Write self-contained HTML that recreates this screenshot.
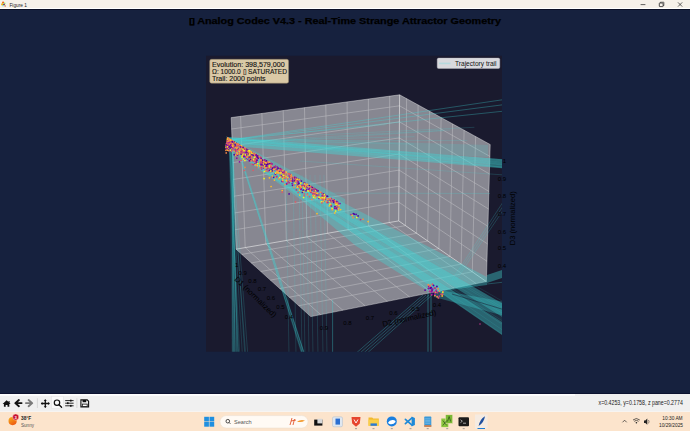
<!DOCTYPE html>
<html><head><meta charset="utf-8">
<style>
html,body{margin:0;padding:0;width:690px;height:431px;overflow:hidden;background:#16213e;font-family:"Liberation Sans",sans-serif;}
.abs{position:absolute;}
#titlebar{left:0;top:0;width:690px;height:8px;background:#f6f1e9;}
#tbline{left:0;top:8px;width:690px;height:1px;background:#ffffff;}
#tbdark{left:0;top:9px;width:690px;height:1px;background:#0b1026;}
#fig{left:0;top:10px;width:690px;height:383px;background:#16213e;}
#figbot{left:0;top:393px;width:690px;height:1px;background:#0d1330;}
#toolbar{left:0;top:394px;width:690px;height:18px;background:#f0f0f0;border-bottom:1px solid #f7f4f1;box-sizing:border-box;}
#tbwhite{left:0;top:394px;width:575px;height:2px;background:linear-gradient(#ffffff,#f9f9f9);}
#taskbar{left:0;top:412px;width:690px;height:19px;background:#fce4cc;}
svg{position:absolute;left:0;top:0;}
.t{position:absolute;white-space:nowrap;line-height:1;}
</style></head><body>
<div class="abs" id="titlebar"></div>
<div class="abs" id="tbline"></div>
<div class="abs" id="tbdark"></div>
<div class="abs" id="fig"></div>
<div class="abs" id="figbot"></div>
<div class="abs" id="toolbar"></div>
<div class="abs" id="tbwhite"></div>
<div class="abs" id="taskbar"></div>
<svg width="690" height="431" viewBox="0 0 690 431" font-family="Liberation Sans, sans-serif">
<rect x="206" y="55.7" width="296" height="296" fill="#1a1a2e"/>
<clipPath id="ax"><rect x="206" y="55.7" width="296" height="296"/></clipPath>
<g clip-path="url(#ax)">
<polygon points="231.2,117.6 399.6,94.8 490.2,144.5 486.4,281.6 310.8,316.6 236.1,249.2" fill="#878791" />
<line x1="240.6" y1="116.3" x2="245.2" y2="247.6" stroke="#b9b8be" stroke-width="0.60" />
<line x1="261.9" y1="113.4" x2="265.8" y2="244.0" stroke="#b9b8be" stroke-width="0.60" />
<line x1="283.2" y1="110.6" x2="286.3" y2="240.5" stroke="#b9b8be" stroke-width="0.60" />
<line x1="304.5" y1="107.7" x2="306.9" y2="236.9" stroke="#b9b8be" stroke-width="0.60" />
<line x1="325.8" y1="104.8" x2="327.5" y2="233.3" stroke="#b9b8be" stroke-width="0.60" />
<line x1="347.1" y1="101.9" x2="348.1" y2="229.7" stroke="#b9b8be" stroke-width="0.60" />
<line x1="368.4" y1="99.0" x2="368.6" y2="226.1" stroke="#b9b8be" stroke-width="0.60" />
<line x1="389.7" y1="96.1" x2="389.2" y2="222.6" stroke="#b9b8be" stroke-width="0.60" />
<line x1="231.6" y1="129.0" x2="399.5" y2="105.8" stroke="#b9b8be" stroke-width="0.60" />
<line x1="232.3" y1="145.8" x2="399.4" y2="121.8" stroke="#b9b8be" stroke-width="0.60" />
<line x1="232.9" y1="162.6" x2="399.3" y2="137.9" stroke="#b9b8be" stroke-width="0.60" />
<line x1="233.5" y1="179.4" x2="399.2" y2="154.0" stroke="#b9b8be" stroke-width="0.60" />
<line x1="234.1" y1="196.2" x2="399.1" y2="170.1" stroke="#b9b8be" stroke-width="0.60" />
<line x1="234.8" y1="212.9" x2="398.9" y2="186.2" stroke="#b9b8be" stroke-width="0.60" />
<line x1="235.4" y1="229.7" x2="398.8" y2="202.2" stroke="#b9b8be" stroke-width="0.60" />
<line x1="406.6" y1="98.6" x2="405.5" y2="225.6" stroke="#b9b8be" stroke-width="0.60" />
<line x1="418.1" y1="104.9" x2="416.6" y2="233.3" stroke="#b9b8be" stroke-width="0.60" />
<line x1="429.6" y1="111.3" x2="427.7" y2="241.0" stroke="#b9b8be" stroke-width="0.60" />
<line x1="441.1" y1="117.6" x2="438.9" y2="248.7" stroke="#b9b8be" stroke-width="0.60" />
<line x1="452.6" y1="123.9" x2="450.0" y2="256.4" stroke="#b9b8be" stroke-width="0.60" />
<line x1="464.1" y1="130.2" x2="461.1" y2="264.1" stroke="#b9b8be" stroke-width="0.60" />
<line x1="475.6" y1="136.5" x2="472.3" y2="271.8" stroke="#b9b8be" stroke-width="0.60" />
<line x1="399.5" y1="105.8" x2="489.9" y2="156.4" stroke="#b9b8be" stroke-width="0.60" />
<line x1="399.4" y1="121.8" x2="489.4" y2="173.9" stroke="#b9b8be" stroke-width="0.60" />
<line x1="399.3" y1="137.9" x2="488.9" y2="191.4" stroke="#b9b8be" stroke-width="0.60" />
<line x1="399.2" y1="154.0" x2="488.4" y2="208.9" stroke="#b9b8be" stroke-width="0.60" />
<line x1="399.1" y1="170.1" x2="487.9" y2="226.3" stroke="#b9b8be" stroke-width="0.60" />
<line x1="398.9" y1="186.2" x2="487.4" y2="243.8" stroke="#b9b8be" stroke-width="0.60" />
<line x1="398.8" y1="202.2" x2="487.0" y2="261.3" stroke="#b9b8be" stroke-width="0.60" />
<line x1="245.2" y1="247.6" x2="320.6" y2="314.6" stroke="#b9b8be" stroke-width="0.60" />
<line x1="265.8" y1="244.0" x2="342.8" y2="310.2" stroke="#b9b8be" stroke-width="0.60" />
<line x1="286.3" y1="240.5" x2="365.1" y2="305.8" stroke="#b9b8be" stroke-width="0.60" />
<line x1="306.9" y1="236.9" x2="387.3" y2="301.4" stroke="#b9b8be" stroke-width="0.60" />
<line x1="327.5" y1="233.3" x2="409.5" y2="296.9" stroke="#b9b8be" stroke-width="0.60" />
<line x1="348.1" y1="229.7" x2="431.7" y2="292.5" stroke="#b9b8be" stroke-width="0.60" />
<line x1="368.6" y1="226.1" x2="453.9" y2="288.1" stroke="#b9b8be" stroke-width="0.60" />
<line x1="389.2" y1="222.6" x2="476.1" y2="283.6" stroke="#b9b8be" stroke-width="0.60" />
<line x1="405.5" y1="225.6" x2="241.9" y2="254.4" stroke="#b9b8be" stroke-width="0.60" />
<line x1="416.6" y1="233.3" x2="251.3" y2="262.9" stroke="#b9b8be" stroke-width="0.60" />
<line x1="427.7" y1="241.0" x2="260.8" y2="271.5" stroke="#b9b8be" stroke-width="0.60" />
<line x1="438.9" y1="248.7" x2="270.3" y2="280.1" stroke="#b9b8be" stroke-width="0.60" />
<line x1="450.0" y1="256.4" x2="279.8" y2="288.6" stroke="#b9b8be" stroke-width="0.60" />
<line x1="461.1" y1="264.1" x2="289.3" y2="297.2" stroke="#b9b8be" stroke-width="0.60" />
<line x1="472.3" y1="271.8" x2="298.8" y2="305.7" stroke="#b9b8be" stroke-width="0.60" />
<line x1="231.2" y1="117.6" x2="399.6" y2="94.8" stroke="#f2f2f2" stroke-width="0.90" stroke-opacity="0.45"/>
<line x1="399.6" y1="94.8" x2="490.2" y2="144.5" stroke="#f2f2f2" stroke-width="0.90" stroke-opacity="0.45"/>
<line x1="490.2" y1="144.5" x2="486.4" y2="281.6" stroke="#f2f2f2" stroke-width="0.90" stroke-opacity="0.45"/>
<line x1="486.4" y1="281.6" x2="310.8" y2="316.6" stroke="#f2f2f2" stroke-width="0.90" stroke-opacity="0.45"/>
<line x1="310.8" y1="316.6" x2="236.1" y2="249.2" stroke="#f2f2f2" stroke-width="0.90" stroke-opacity="0.45"/>
<line x1="236.1" y1="249.2" x2="231.2" y2="117.6" stroke="#f2f2f2" stroke-width="0.90" stroke-opacity="0.45"/>
<line x1="399.6" y1="94.8" x2="398.7" y2="220.9" stroke="#f2f2f2" stroke-width="0.90" stroke-opacity="0.65"/>
<line x1="236.1" y1="249.2" x2="398.7" y2="220.9" stroke="#f2f2f2" stroke-width="0.90" stroke-opacity="0.65"/>
<line x1="398.7" y1="220.9" x2="486.4" y2="281.6" stroke="#f2f2f2" stroke-width="0.90" stroke-opacity="0.65"/>
<polygon points="228.0,137.0 505.0,159.5 505.0,168.5 232.0,146.0" fill="#40d8d8" fill-opacity="0.42"/>
<line x1="229.3" y1="140.6" x2="505.0" y2="159.7" stroke="#40d8d8" stroke-width="0.60" stroke-opacity="0.25"/>
<line x1="230.6" y1="143.2" x2="505.0" y2="160.7" stroke="#40d8d8" stroke-width="0.60" stroke-opacity="0.25"/>
<line x1="230.1" y1="142.3" x2="505.0" y2="162.2" stroke="#40d8d8" stroke-width="0.60" stroke-opacity="0.25"/>
<line x1="228.2" y1="138.5" x2="505.0" y2="163.4" stroke="#40d8d8" stroke-width="0.60" stroke-opacity="0.25"/>
<line x1="228.1" y1="138.3" x2="505.0" y2="164.5" stroke="#40d8d8" stroke-width="0.60" stroke-opacity="0.25"/>
<line x1="228.3" y1="138.6" x2="505.0" y2="165.2" stroke="#40d8d8" stroke-width="0.60" stroke-opacity="0.25"/>
<line x1="229.7" y1="141.4" x2="505.0" y2="167.2" stroke="#40d8d8" stroke-width="0.60" stroke-opacity="0.25"/>
<line x1="228.5" y1="139.0" x2="505.0" y2="167.6" stroke="#40d8d8" stroke-width="0.60" stroke-opacity="0.25"/>
<polygon points="228.0,137.0 488.0,145.0 488.0,157.0 232.0,144.0" fill="#40d8d8" fill-opacity="0.16"/>
<line x1="230.0" y1="140.0" x2="505.0" y2="99.4" stroke="#40d8d8" stroke-width="0.80" stroke-opacity="0.4"/>
<line x1="230.0" y1="140.0" x2="505.0" y2="104.5" stroke="#40d8d8" stroke-width="0.80" stroke-opacity="0.4"/>
<line x1="230.0" y1="140.0" x2="505.0" y2="111.0" stroke="#40d8d8" stroke-width="0.80" stroke-opacity="0.4"/>
<line x1="230.9" y1="143.7" x2="443.5" y2="130.7" stroke="#40d8d8" stroke-width="0.60" stroke-opacity="0.3"/>
<line x1="231.9" y1="139.2" x2="474.4" y2="127.3" stroke="#40d8d8" stroke-width="0.60" stroke-opacity="0.3"/>
<line x1="229.4" y1="139.6" x2="413.9" y2="144.1" stroke="#40d8d8" stroke-width="0.60" stroke-opacity="0.3"/>
<line x1="229.5" y1="141.9" x2="450.3" y2="129.9" stroke="#40d8d8" stroke-width="0.60" stroke-opacity="0.3"/>
<line x1="230.6" y1="139.3" x2="386.6" y2="124.6" stroke="#40d8d8" stroke-width="0.60" stroke-opacity="0.3"/>
<line x1="231.0" y1="141.1" x2="414.6" y2="136.7" stroke="#40d8d8" stroke-width="0.60" stroke-opacity="0.3"/>
<line x1="230.4" y1="140.5" x2="467.4" y2="140.4" stroke="#40d8d8" stroke-width="0.60" stroke-opacity="0.3"/>
<line x1="300.0" y1="193.0" x2="490.0" y2="193.5" stroke="#40d8d8" stroke-width="0.60" stroke-opacity="0.35"/>
<line x1="300.0" y1="161.0" x2="505.0" y2="175.0" stroke="#40d8d8" stroke-width="0.60" stroke-opacity="0.3"/>
<polygon points="228.0,143.0 487.0,277.0 487.0,285.0 430.0,292.5 356.0,246.0 300.0,199.0 232.0,150.0" fill="#40d8d8" fill-opacity="0.36"/>
<polygon points="228.0,145.0 505.0,305.0 505.0,319.0 232.0,148.0" fill="#40d8d8" fill-opacity="0.4"/>
<polygon points="228.0,147.0 505.0,324.0 505.0,337.0 232.0,150.0" fill="#40d8d8" fill-opacity="0.4"/>
<polygon points="228.0,146.0 505.0,319.0 505.0,324.0 232.0,149.0" fill="#40d8d8" fill-opacity="0.12"/>
<line x1="229.0" y1="144.0" x2="505.0" y2="302.7" stroke="#40d8d8" stroke-width="0.60" stroke-opacity="0.20"/>
<line x1="230.1" y1="146.2" x2="505.0" y2="308.9" stroke="#40d8d8" stroke-width="0.60" stroke-opacity="0.20"/>
<line x1="230.9" y1="147.8" x2="505.0" y2="310.9" stroke="#40d8d8" stroke-width="0.60" stroke-opacity="0.20"/>
<line x1="231.9" y1="149.8" x2="505.0" y2="314.8" stroke="#40d8d8" stroke-width="0.60" stroke-opacity="0.20"/>
<line x1="229.7" y1="145.3" x2="505.0" y2="322.6" stroke="#40d8d8" stroke-width="0.60" stroke-opacity="0.20"/>
<line x1="228.6" y1="143.2" x2="505.0" y2="326.1" stroke="#40d8d8" stroke-width="0.60" stroke-opacity="0.20"/>
<line x1="228.2" y1="142.3" x2="505.0" y2="331.7" stroke="#40d8d8" stroke-width="0.60" stroke-opacity="0.20"/>
<line x1="231.1" y1="148.1" x2="505.0" y2="336.0" stroke="#40d8d8" stroke-width="0.60" stroke-opacity="0.20"/>
<polygon points="226.0,136.0 345.0,199.0 345.0,213.0 232.0,151.0" fill="#40d8d8" fill-opacity="0.3"/>
<line x1="452.0" y1="280.0" x2="505.0" y2="199.0" stroke="#40d8d8" stroke-width="0.60" stroke-opacity="0.35"/>
<line x1="454.0" y1="280.0" x2="505.5" y2="202.5" stroke="#40d8d8" stroke-width="0.60" stroke-opacity="0.35"/>
<line x1="456.0" y1="280.0" x2="506.0" y2="206.0" stroke="#40d8d8" stroke-width="0.60" stroke-opacity="0.35"/>
<polygon points="434.0,289.0 505.0,302.0 505.0,316.0 434.0,297.0" fill="#40d8d8" fill-opacity="0.3"/>
<line x1="452.0" y1="294.0" x2="505.0" y2="310.0" stroke="#1a1a2e" stroke-width="1.00" stroke-opacity="0.5"/>
<polygon points="487.0,275.0 505.0,269.0 505.0,277.0 487.0,283.0" fill="#40d8d8" fill-opacity="0.4"/>
<line x1="487.0" y1="284.0" x2="505.0" y2="282.0" stroke="#40d8d8" stroke-width="0.70" stroke-opacity="0.4"/>
<line x1="233.4" y1="143.5" x2="232.2" y2="355.0" stroke="#40d8d8" stroke-width="0.60" stroke-opacity="0.30"/>
<line x1="232.5" y1="142.8" x2="233.1" y2="355.0" stroke="#40d8d8" stroke-width="0.60" stroke-opacity="0.30"/>
<line x1="231.9" y1="142.3" x2="233.6" y2="355.0" stroke="#40d8d8" stroke-width="0.60" stroke-opacity="0.30"/>
<line x1="233.2" y1="143.4" x2="234.6" y2="355.0" stroke="#40d8d8" stroke-width="0.60" stroke-opacity="0.30"/>
<line x1="231.4" y1="141.9" x2="235.1" y2="355.0" stroke="#40d8d8" stroke-width="0.60" stroke-opacity="0.30"/>
<line x1="229.3" y1="140.2" x2="235.8" y2="355.0" stroke="#40d8d8" stroke-width="0.60" stroke-opacity="0.30"/>
<line x1="232.2" y1="142.6" x2="236.7" y2="355.0" stroke="#40d8d8" stroke-width="0.60" stroke-opacity="0.30"/>
<line x1="233.1" y1="143.3" x2="236.9" y2="355.0" stroke="#40d8d8" stroke-width="0.60" stroke-opacity="0.30"/>
<line x1="230.9" y1="141.5" x2="237.8" y2="355.0" stroke="#40d8d8" stroke-width="0.60" stroke-opacity="0.30"/>
<line x1="229.1" y1="140.1" x2="238.3" y2="355.0" stroke="#40d8d8" stroke-width="0.60" stroke-opacity="0.30"/>
<line x1="229.8" y1="140.7" x2="238.7" y2="355.0" stroke="#40d8d8" stroke-width="0.60" stroke-opacity="0.30"/>
<line x1="229.3" y1="140.2" x2="239.8" y2="355.0" stroke="#40d8d8" stroke-width="0.60" stroke-opacity="0.30"/>
<line x1="229.6" y1="140.5" x2="242.4" y2="355.0" stroke="#40d8d8" stroke-width="0.60" stroke-opacity="0.30"/>
<line x1="231.0" y1="141.6" x2="244.8" y2="355.0" stroke="#40d8d8" stroke-width="0.60" stroke-opacity="0.30"/>
<line x1="229.4" y1="140.3" x2="245.7" y2="355.0" stroke="#40d8d8" stroke-width="0.60" stroke-opacity="0.30"/>
<line x1="231.7" y1="142.2" x2="247.8" y2="355.0" stroke="#40d8d8" stroke-width="0.60" stroke-opacity="0.30"/>
<polygon points="229.0,140.0 234.0,140.0 235.0,355.0 232.0,355.0" fill="#40d8d8" fill-opacity="0.12"/>
<polygon points="234.5,140.0 235.8,140.0 305.0,355.0 302.5,355.0" fill="#40d8d8" fill-opacity="0.2"/>
<line x1="235.6" y1="140.8" x2="302.1" y2="355.0" stroke="#40d8d8" stroke-width="0.60" stroke-opacity="0.35"/>
<line x1="234.6" y1="140.3" x2="302.8" y2="355.0" stroke="#40d8d8" stroke-width="0.60" stroke-opacity="0.35"/>
<line x1="234.7" y1="140.4" x2="304.6" y2="355.0" stroke="#40d8d8" stroke-width="0.60" stroke-opacity="0.35"/>
<line x1="235.9" y1="141.0" x2="304.9" y2="355.0" stroke="#40d8d8" stroke-width="0.60" stroke-opacity="0.35"/>
<line x1="286.0" y1="175.0" x2="289.0" y2="355.0" stroke="#40d8d8" stroke-width="0.60" stroke-opacity="0.28"/>
<line x1="293.0" y1="175.0" x2="296.0" y2="355.0" stroke="#40d8d8" stroke-width="0.60" stroke-opacity="0.28"/>
<line x1="299.0" y1="175.0" x2="302.0" y2="355.0" stroke="#40d8d8" stroke-width="0.60" stroke-opacity="0.28"/>
<line x1="302.0" y1="175.0" x2="305.0" y2="355.0" stroke="#40d8d8" stroke-width="0.60" stroke-opacity="0.28"/>
<line x1="306.0" y1="175.0" x2="309.0" y2="355.0" stroke="#40d8d8" stroke-width="0.60" stroke-opacity="0.28"/>
<line x1="310.0" y1="175.0" x2="313.0" y2="355.0" stroke="#40d8d8" stroke-width="0.60" stroke-opacity="0.28"/>
<line x1="315.0" y1="175.0" x2="318.0" y2="355.0" stroke="#40d8d8" stroke-width="0.60" stroke-opacity="0.28"/>
<line x1="320.0" y1="175.0" x2="323.0" y2="355.0" stroke="#40d8d8" stroke-width="0.60" stroke-opacity="0.28"/>
<line x1="324.0" y1="175.0" x2="327.0" y2="355.0" stroke="#40d8d8" stroke-width="0.60" stroke-opacity="0.28"/>
<line x1="428.0" y1="291.0" x2="428.0" y2="355.0" stroke="#40d8d8" stroke-width="0.80" stroke-opacity="0.5"/>
<line x1="431.0" y1="291.0" x2="431.0" y2="355.0" stroke="#40d8d8" stroke-width="0.80" stroke-opacity="0.5"/>
<line x1="423.0" y1="295.0" x2="354.0" y2="355.0" stroke="#40d8d8" stroke-width="0.70" stroke-opacity="0.42"/>
<line x1="426.0" y1="295.0" x2="357.7" y2="355.0" stroke="#40d8d8" stroke-width="0.70" stroke-opacity="0.42"/>
<line x1="429.0" y1="295.0" x2="361.4" y2="355.0" stroke="#40d8d8" stroke-width="0.70" stroke-opacity="0.42"/>
<line x1="432.0" y1="295.0" x2="365.1" y2="355.0" stroke="#40d8d8" stroke-width="0.70" stroke-opacity="0.42"/>
<line x1="332.6" y1="300.0" x2="332.6" y2="355.0" stroke="#40d8d8" stroke-width="0.70" stroke-opacity="0.5"/>
</g>
<g><circle cx="235.3" cy="146.7" r="0.85" fill="#f0f921"/><circle cx="235.2" cy="149.4" r="0.85" fill="#8b0aa5"/><circle cx="258.3" cy="156.1" r="0.85" fill="#febd2a"/><circle cx="331.1" cy="204.8" r="0.85" fill="#5302a3"/><circle cx="260.7" cy="167.7" r="0.85" fill="#febd2a"/><circle cx="255.4" cy="154.4" r="0.85" fill="#8b0aa5"/><circle cx="265.1" cy="161.5" r="0.85" fill="#f48849"/><circle cx="234.1" cy="147.2" r="0.85" fill="#5302a3"/><circle cx="231.3" cy="140.4" r="0.85" fill="#f0f921"/><circle cx="227.9" cy="139.8" r="0.85" fill="#f0f921"/><circle cx="253.7" cy="153.4" r="0.85" fill="#febd2a"/><circle cx="232.5" cy="141.1" r="0.85" fill="#f48849"/><circle cx="264.8" cy="162.6" r="0.85" fill="#db5c68"/><circle cx="264.1" cy="165.0" r="0.85" fill="#febd2a"/><circle cx="226.5" cy="146.3" r="0.85" fill="#febd2a"/><circle cx="326.0" cy="197.7" r="0.85" fill="#db5c68"/><circle cx="335.8" cy="207.7" r="0.85" fill="#f48849"/><circle cx="325.5" cy="195.0" r="0.85" fill="#b83289"/><circle cx="270.8" cy="167.5" r="0.85" fill="#b83289"/><circle cx="309.3" cy="186.2" r="0.85" fill="#b83289"/><circle cx="237.7" cy="144.2" r="0.85" fill="#db5c68"/><circle cx="263.6" cy="163.0" r="0.85" fill="#f0f921"/><circle cx="333.4" cy="199.6" r="0.85" fill="#f48849"/><circle cx="229.0" cy="146.0" r="0.85" fill="#febd2a"/><circle cx="236.6" cy="148.7" r="0.85" fill="#5302a3"/><circle cx="263.6" cy="168.0" r="0.85" fill="#5302a3"/><circle cx="312.7" cy="193.6" r="0.85" fill="#b83289"/><circle cx="263.9" cy="165.5" r="0.85" fill="#db5c68"/><circle cx="228.7" cy="149.0" r="0.85" fill="#5302a3"/><circle cx="297.1" cy="180.2" r="0.85" fill="#8b0aa5"/><circle cx="228.2" cy="138.6" r="0.85" fill="#f0f921"/><circle cx="312.3" cy="188.9" r="0.85" fill="#f48849"/><circle cx="234.1" cy="144.8" r="0.85" fill="#8b0aa5"/><circle cx="270.2" cy="166.3" r="0.85" fill="#f48849"/><circle cx="337.0" cy="209.1" r="0.85" fill="#b83289"/><circle cx="243.5" cy="159.0" r="0.85" fill="#f0f921"/><circle cx="248.7" cy="150.5" r="0.85" fill="#f48849"/><circle cx="323.4" cy="195.7" r="0.85" fill="#febd2a"/><circle cx="257.1" cy="163.0" r="0.85" fill="#febd2a"/><circle cx="268.6" cy="163.4" r="0.85" fill="#b83289"/><circle cx="280.6" cy="172.9" r="0.85" fill="#f0f921"/><circle cx="297.1" cy="180.2" r="0.85" fill="#db5c68"/><circle cx="291.3" cy="175.2" r="0.85" fill="#febd2a"/><circle cx="228.7" cy="141.5" r="0.85" fill="#5302a3"/><circle cx="304.3" cy="182.8" r="0.85" fill="#5302a3"/><circle cx="260.4" cy="160.6" r="0.85" fill="#febd2a"/><circle cx="280.2" cy="173.3" r="0.85" fill="#febd2a"/><circle cx="267.4" cy="167.9" r="0.85" fill="#febd2a"/><circle cx="319.3" cy="197.4" r="0.85" fill="#b83289"/><circle cx="314.2" cy="191.1" r="0.85" fill="#8b0aa5"/><circle cx="255.2" cy="155.4" r="0.85" fill="#b83289"/><circle cx="288.0" cy="181.8" r="0.85" fill="#8b0aa5"/><circle cx="330.2" cy="199.5" r="0.85" fill="#8b0aa5"/><circle cx="335.0" cy="201.8" r="0.85" fill="#8b0aa5"/><circle cx="256.0" cy="154.8" r="0.85" fill="#b83289"/><circle cx="293.9" cy="181.2" r="0.85" fill="#f48849"/><circle cx="249.1" cy="155.5" r="0.85" fill="#5302a3"/><circle cx="248.6" cy="157.4" r="0.85" fill="#5302a3"/><circle cx="254.5" cy="154.1" r="0.85" fill="#8b0aa5"/><circle cx="337.5" cy="205.3" r="0.85" fill="#8b0aa5"/><circle cx="230.0" cy="141.9" r="0.85" fill="#8b0aa5"/><circle cx="309.6" cy="196.6" r="0.85" fill="#db5c68"/><circle cx="256.9" cy="155.2" r="0.85" fill="#db5c68"/><circle cx="230.2" cy="142.2" r="0.85" fill="#b83289"/><circle cx="256.8" cy="167.2" r="0.85" fill="#db5c68"/><circle cx="228.9" cy="147.1" r="0.85" fill="#5302a3"/><circle cx="242.3" cy="150.8" r="0.85" fill="#f48849"/><circle cx="327.7" cy="200.2" r="0.85" fill="#8b0aa5"/><circle cx="228.5" cy="139.8" r="0.85" fill="#db5c68"/><circle cx="228.9" cy="139.0" r="0.85" fill="#db5c68"/><circle cx="283.8" cy="171.9" r="0.85" fill="#b83289"/><circle cx="243.0" cy="150.2" r="0.85" fill="#db5c68"/><circle cx="226.9" cy="146.6" r="0.85" fill="#febd2a"/><circle cx="263.9" cy="163.4" r="0.85" fill="#8b0aa5"/><circle cx="287.9" cy="173.7" r="0.85" fill="#f48849"/><circle cx="335.6" cy="200.9" r="0.85" fill="#b83289"/><circle cx="337.6" cy="202.4" r="0.85" fill="#8b0aa5"/><circle cx="255.0" cy="164.0" r="0.85" fill="#5302a3"/><circle cx="312.7" cy="195.8" r="0.85" fill="#f48849"/><circle cx="234.4" cy="146.3" r="0.85" fill="#f48849"/><circle cx="319.0" cy="193.6" r="0.85" fill="#db5c68"/><circle cx="228.6" cy="139.4" r="0.85" fill="#db5c68"/><circle cx="260.8" cy="160.2" r="0.85" fill="#febd2a"/><circle cx="244.4" cy="170.4" r="0.85" fill="#db5c68"/><circle cx="238.2" cy="149.6" r="0.85" fill="#db5c68"/><circle cx="266.7" cy="167.7" r="0.85" fill="#febd2a"/><circle cx="303.3" cy="191.1" r="0.85" fill="#f0f921"/><circle cx="226.6" cy="149.0" r="0.85" fill="#db5c68"/><circle cx="282.0" cy="181.4" r="0.85" fill="#8b0aa5"/><circle cx="286.4" cy="180.6" r="0.85" fill="#f0f921"/><circle cx="255.1" cy="154.2" r="0.85" fill="#f0f921"/><circle cx="282.2" cy="190.5" r="0.85" fill="#febd2a"/><circle cx="283.3" cy="173.4" r="0.85" fill="#febd2a"/><circle cx="301.5" cy="181.1" r="0.85" fill="#5302a3"/><circle cx="312.5" cy="187.5" r="0.85" fill="#b83289"/><circle cx="230.4" cy="139.9" r="0.85" fill="#f48849"/><circle cx="333.6" cy="200.9" r="0.85" fill="#5302a3"/><circle cx="282.5" cy="176.5" r="0.85" fill="#febd2a"/><circle cx="242.6" cy="149.0" r="0.85" fill="#febd2a"/><circle cx="230.1" cy="143.7" r="0.85" fill="#febd2a"/><circle cx="240.8" cy="152.4" r="0.85" fill="#b83289"/><circle cx="239.3" cy="150.1" r="0.85" fill="#f48849"/><circle cx="266.8" cy="161.3" r="0.85" fill="#5302a3"/><circle cx="281.2" cy="175.8" r="0.85" fill="#5302a3"/><circle cx="280.0" cy="169.5" r="0.85" fill="#f0f921"/><circle cx="273.8" cy="177.3" r="0.85" fill="#5302a3"/><circle cx="264.9" cy="165.3" r="0.85" fill="#febd2a"/><circle cx="244.8" cy="151.5" r="0.85" fill="#f48849"/><circle cx="262.7" cy="163.5" r="0.85" fill="#db5c68"/><circle cx="337.0" cy="201.7" r="0.85" fill="#5302a3"/><circle cx="243.8" cy="155.6" r="0.85" fill="#db5c68"/><circle cx="253.8" cy="159.2" r="0.85" fill="#b83289"/><circle cx="228.2" cy="148.3" r="0.85" fill="#f48849"/><circle cx="231.8" cy="148.1" r="0.85" fill="#febd2a"/><circle cx="243.2" cy="153.9" r="0.85" fill="#febd2a"/><circle cx="254.5" cy="159.9" r="0.85" fill="#febd2a"/><circle cx="291.2" cy="175.2" r="0.85" fill="#f48849"/><circle cx="246.4" cy="156.5" r="0.85" fill="#5302a3"/><circle cx="248.3" cy="151.7" r="0.85" fill="#b83289"/><circle cx="294.5" cy="183.7" r="0.85" fill="#db5c68"/><circle cx="240.7" cy="153.3" r="0.85" fill="#5302a3"/><circle cx="251.2" cy="157.1" r="0.85" fill="#db5c68"/><circle cx="316.3" cy="193.0" r="0.85" fill="#8b0aa5"/><circle cx="240.8" cy="150.9" r="0.85" fill="#febd2a"/><circle cx="246.8" cy="154.1" r="0.85" fill="#5302a3"/><circle cx="310.3" cy="186.2" r="0.85" fill="#febd2a"/><circle cx="273.0" cy="168.0" r="0.85" fill="#f48849"/><circle cx="281.7" cy="172.0" r="0.85" fill="#db5c68"/><circle cx="264.5" cy="167.4" r="0.85" fill="#f48849"/><circle cx="250.3" cy="152.3" r="0.85" fill="#db5c68"/><circle cx="256.2" cy="158.8" r="0.85" fill="#8b0aa5"/><circle cx="233.9" cy="150.4" r="0.85" fill="#b83289"/><circle cx="266.7" cy="166.4" r="0.85" fill="#db5c68"/><circle cx="340.0" cy="203.5" r="0.85" fill="#8b0aa5"/><circle cx="272.8" cy="168.1" r="0.85" fill="#db5c68"/><circle cx="239.7" cy="151.5" r="0.85" fill="#f0f921"/><circle cx="235.7" cy="155.1" r="0.85" fill="#febd2a"/><circle cx="237.7" cy="148.8" r="0.85" fill="#5302a3"/><circle cx="267.3" cy="161.6" r="0.85" fill="#febd2a"/><circle cx="283.7" cy="172.8" r="0.85" fill="#b83289"/><circle cx="229.6" cy="146.4" r="0.85" fill="#f48849"/><circle cx="332.6" cy="200.9" r="0.85" fill="#5302a3"/><circle cx="232.8" cy="141.3" r="0.85" fill="#f0f921"/><circle cx="265.2" cy="166.6" r="0.85" fill="#febd2a"/><circle cx="316.0" cy="195.5" r="0.85" fill="#8b0aa5"/><circle cx="233.8" cy="144.9" r="0.85" fill="#8b0aa5"/><circle cx="330.4" cy="200.6" r="0.85" fill="#f48849"/><circle cx="230.4" cy="139.9" r="0.85" fill="#5302a3"/><circle cx="305.0" cy="187.6" r="0.85" fill="#db5c68"/><circle cx="332.4" cy="209.6" r="0.85" fill="#febd2a"/><circle cx="284.5" cy="174.2" r="0.85" fill="#febd2a"/><circle cx="330.8" cy="200.2" r="0.85" fill="#db5c68"/><circle cx="239.0" cy="148.0" r="0.85" fill="#f48849"/><circle cx="243.7" cy="150.8" r="0.85" fill="#b83289"/><circle cx="264.0" cy="163.2" r="0.85" fill="#db5c68"/><circle cx="227.9" cy="145.3" r="0.85" fill="#f48849"/><circle cx="229.5" cy="143.6" r="0.85" fill="#febd2a"/><circle cx="226.9" cy="146.0" r="0.85" fill="#f48849"/><circle cx="251.7" cy="155.4" r="0.85" fill="#febd2a"/><circle cx="228.9" cy="142.9" r="0.85" fill="#b83289"/><circle cx="246.4" cy="154.0" r="0.85" fill="#db5c68"/><circle cx="231.6" cy="141.3" r="0.85" fill="#f0f921"/><circle cx="236.0" cy="147.5" r="0.85" fill="#f0f921"/><circle cx="232.5" cy="149.1" r="0.85" fill="#b83289"/><circle cx="228.1" cy="138.5" r="0.85" fill="#b83289"/><circle cx="255.3" cy="155.5" r="0.85" fill="#db5c68"/><circle cx="296.4" cy="189.9" r="0.85" fill="#b83289"/><circle cx="286.6" cy="175.9" r="0.85" fill="#f48849"/><circle cx="228.0" cy="139.9" r="0.85" fill="#db5c68"/><circle cx="260.9" cy="157.8" r="0.85" fill="#5302a3"/><circle cx="244.4" cy="148.0" r="0.85" fill="#b83289"/><circle cx="252.0" cy="164.1" r="0.85" fill="#db5c68"/><circle cx="311.4" cy="189.4" r="0.85" fill="#f48849"/><circle cx="271.9" cy="168.1" r="0.85" fill="#db5c68"/><circle cx="251.7" cy="156.6" r="0.85" fill="#f48849"/><circle cx="228.1" cy="141.0" r="0.85" fill="#5302a3"/><circle cx="308.0" cy="190.5" r="0.85" fill="#f0f921"/><circle cx="249.1" cy="155.3" r="0.85" fill="#f0f921"/><circle cx="228.1" cy="142.0" r="0.85" fill="#db5c68"/><circle cx="227.7" cy="138.3" r="0.85" fill="#5302a3"/><circle cx="227.3" cy="142.2" r="0.85" fill="#f48849"/><circle cx="305.6" cy="191.0" r="0.85" fill="#febd2a"/><circle cx="232.6" cy="144.2" r="0.85" fill="#db5c68"/><circle cx="311.3" cy="190.4" r="0.85" fill="#f0f921"/><circle cx="239.4" cy="151.7" r="0.85" fill="#f0f921"/><circle cx="230.1" cy="139.8" r="0.85" fill="#b83289"/><circle cx="240.7" cy="150.5" r="0.85" fill="#db5c68"/><circle cx="234.2" cy="146.1" r="0.85" fill="#8b0aa5"/><circle cx="338.0" cy="205.7" r="0.85" fill="#febd2a"/><circle cx="337.8" cy="207.0" r="0.85" fill="#b83289"/><circle cx="240.4" cy="145.7" r="0.85" fill="#febd2a"/><circle cx="314.7" cy="194.6" r="0.85" fill="#8b0aa5"/><circle cx="304.9" cy="185.9" r="0.85" fill="#db5c68"/><circle cx="298.2" cy="185.5" r="0.85" fill="#b83289"/><circle cx="236.0" cy="147.0" r="0.85" fill="#b83289"/><circle cx="247.5" cy="156.7" r="0.85" fill="#b83289"/><circle cx="267.7" cy="165.9" r="0.85" fill="#5302a3"/><circle cx="229.3" cy="150.6" r="0.85" fill="#b83289"/><circle cx="313.9" cy="192.7" r="0.85" fill="#8b0aa5"/><circle cx="228.4" cy="141.7" r="0.85" fill="#f0f921"/><circle cx="235.9" cy="151.2" r="0.85" fill="#f0f921"/><circle cx="241.6" cy="152.2" r="0.85" fill="#5302a3"/><circle cx="231.5" cy="140.6" r="0.85" fill="#f48849"/><circle cx="250.0" cy="151.3" r="0.85" fill="#db5c68"/><circle cx="228.0" cy="141.0" r="0.85" fill="#db5c68"/><circle cx="257.2" cy="155.4" r="0.85" fill="#f0f921"/><circle cx="246.3" cy="154.8" r="0.85" fill="#5302a3"/><circle cx="255.2" cy="164.7" r="0.85" fill="#febd2a"/><circle cx="234.5" cy="142.3" r="0.85" fill="#db5c68"/><circle cx="256.9" cy="157.6" r="0.85" fill="#db5c68"/><circle cx="256.4" cy="164.8" r="0.85" fill="#f48849"/><circle cx="257.0" cy="161.0" r="0.85" fill="#f48849"/><circle cx="286.0" cy="172.8" r="0.85" fill="#f48849"/><circle cx="323.4" cy="199.4" r="0.85" fill="#5302a3"/><circle cx="255.7" cy="161.4" r="0.85" fill="#5302a3"/><circle cx="228.9" cy="139.4" r="0.85" fill="#f48849"/><circle cx="230.5" cy="140.6" r="0.85" fill="#8b0aa5"/><circle cx="250.7" cy="152.5" r="0.85" fill="#b83289"/><circle cx="327.1" cy="202.4" r="0.85" fill="#b83289"/><circle cx="245.2" cy="155.1" r="0.85" fill="#5302a3"/><circle cx="336.1" cy="203.7" r="0.85" fill="#f48849"/><circle cx="229.8" cy="143.3" r="0.85" fill="#b83289"/><circle cx="284.3" cy="177.9" r="0.85" fill="#b83289"/><circle cx="313.0" cy="187.8" r="0.85" fill="#b83289"/><circle cx="227.5" cy="144.2" r="0.85" fill="#8b0aa5"/><circle cx="241.0" cy="148.7" r="0.85" fill="#b83289"/><circle cx="228.6" cy="138.8" r="0.85" fill="#db5c68"/><circle cx="232.1" cy="141.7" r="0.85" fill="#febd2a"/><circle cx="315.2" cy="193.5" r="0.85" fill="#b83289"/><circle cx="259.0" cy="156.5" r="0.85" fill="#f48849"/><circle cx="267.4" cy="165.0" r="0.85" fill="#f48849"/><circle cx="239.8" cy="149.3" r="0.85" fill="#f48849"/><circle cx="313.2" cy="192.7" r="0.85" fill="#f48849"/><circle cx="259.6" cy="156.8" r="0.85" fill="#f48849"/><circle cx="267.6" cy="164.4" r="0.85" fill="#db5c68"/><circle cx="304.6" cy="185.7" r="0.85" fill="#5302a3"/><circle cx="300.0" cy="187.8" r="0.85" fill="#5302a3"/><circle cx="317.2" cy="190.8" r="0.85" fill="#8b0aa5"/><circle cx="235.8" cy="151.5" r="0.85" fill="#b83289"/><circle cx="291.3" cy="178.3" r="0.85" fill="#b83289"/><circle cx="229.5" cy="139.4" r="0.85" fill="#f0f921"/><circle cx="242.3" cy="156.0" r="0.85" fill="#8b0aa5"/><circle cx="240.6" cy="154.1" r="0.85" fill="#f0f921"/><circle cx="267.9" cy="164.2" r="0.85" fill="#5302a3"/><circle cx="237.7" cy="144.1" r="0.85" fill="#db5c68"/><circle cx="322.3" cy="199.4" r="0.85" fill="#db5c68"/><circle cx="232.1" cy="140.9" r="0.85" fill="#f48849"/><circle cx="273.9" cy="167.7" r="0.85" fill="#8b0aa5"/><circle cx="241.9" cy="146.6" r="0.85" fill="#f48849"/><circle cx="242.7" cy="148.8" r="0.85" fill="#f0f921"/><circle cx="233.5" cy="144.4" r="0.85" fill="#f0f921"/><circle cx="299.0" cy="185.5" r="0.85" fill="#febd2a"/><circle cx="242.1" cy="146.7" r="0.85" fill="#db5c68"/><circle cx="298.6" cy="179.4" r="0.85" fill="#b83289"/><circle cx="234.1" cy="142.2" r="0.85" fill="#5302a3"/><circle cx="233.0" cy="141.9" r="0.85" fill="#5302a3"/><circle cx="226.6" cy="145.4" r="0.85" fill="#f48849"/><circle cx="271.1" cy="167.1" r="0.85" fill="#db5c68"/><circle cx="277.8" cy="172.5" r="0.85" fill="#8b0aa5"/><circle cx="226.1" cy="146.8" r="0.85" fill="#8b0aa5"/><circle cx="260.8" cy="163.2" r="0.85" fill="#db5c68"/><circle cx="255.6" cy="159.0" r="0.85" fill="#5302a3"/><circle cx="227.8" cy="145.9" r="0.85" fill="#f0f921"/><circle cx="261.0" cy="157.7" r="0.85" fill="#febd2a"/><circle cx="240.8" cy="150.5" r="0.85" fill="#f48849"/><circle cx="236.2" cy="146.1" r="0.85" fill="#8b0aa5"/><circle cx="227.8" cy="138.4" r="0.85" fill="#b83289"/><circle cx="269.7" cy="163.3" r="0.85" fill="#f48849"/><circle cx="309.7" cy="190.7" r="0.85" fill="#5302a3"/><circle cx="338.6" cy="208.5" r="0.85" fill="#febd2a"/><circle cx="294.1" cy="187.3" r="0.85" fill="#f48849"/><circle cx="229.5" cy="143.3" r="0.85" fill="#b83289"/><circle cx="238.4" cy="152.4" r="0.85" fill="#db5c68"/><circle cx="321.8" cy="197.9" r="0.85" fill="#db5c68"/><circle cx="294.9" cy="180.4" r="0.85" fill="#febd2a"/><circle cx="334.6" cy="207.8" r="0.85" fill="#b83289"/><circle cx="230.3" cy="140.8" r="0.85" fill="#b83289"/><circle cx="330.8" cy="201.6" r="0.85" fill="#db5c68"/><circle cx="237.1" cy="143.8" r="0.85" fill="#febd2a"/><circle cx="262.7" cy="165.6" r="0.85" fill="#5302a3"/><circle cx="317.4" cy="190.3" r="0.85" fill="#db5c68"/><circle cx="305.8" cy="189.3" r="0.85" fill="#f0f921"/><circle cx="228.8" cy="146.2" r="0.85" fill="#8b0aa5"/><circle cx="282.6" cy="172.6" r="0.85" fill="#8b0aa5"/><circle cx="292.9" cy="181.6" r="0.85" fill="#5302a3"/><circle cx="292.7" cy="180.0" r="0.85" fill="#5302a3"/><circle cx="316.5" cy="193.6" r="0.85" fill="#febd2a"/><circle cx="322.5" cy="194.7" r="0.85" fill="#f48849"/><circle cx="230.8" cy="144.7" r="0.85" fill="#5302a3"/><circle cx="311.4" cy="192.0" r="0.85" fill="#db5c68"/><circle cx="263.4" cy="167.3" r="0.85" fill="#db5c68"/><circle cx="246.4" cy="158.1" r="0.85" fill="#5302a3"/><circle cx="250.3" cy="156.2" r="0.85" fill="#db5c68"/><circle cx="303.3" cy="185.3" r="0.85" fill="#febd2a"/><circle cx="315.9" cy="192.4" r="0.85" fill="#f48849"/><circle cx="269.3" cy="165.4" r="0.85" fill="#febd2a"/><circle cx="294.3" cy="178.1" r="0.85" fill="#5302a3"/><circle cx="276.3" cy="169.5" r="0.85" fill="#f48849"/><circle cx="226.6" cy="143.5" r="0.85" fill="#5302a3"/><circle cx="249.0" cy="160.9" r="0.85" fill="#b83289"/><circle cx="335.1" cy="200.6" r="0.85" fill="#f0f921"/><circle cx="331.3" cy="198.4" r="0.85" fill="#b83289"/><circle cx="329.7" cy="201.2" r="0.85" fill="#5302a3"/><circle cx="265.4" cy="166.1" r="0.85" fill="#febd2a"/><circle cx="306.3" cy="185.2" r="0.85" fill="#f48849"/><circle cx="322.6" cy="194.7" r="0.85" fill="#f48849"/><circle cx="321.2" cy="198.3" r="0.85" fill="#febd2a"/><circle cx="267.0" cy="165.1" r="0.85" fill="#b83289"/><circle cx="330.1" cy="204.2" r="0.85" fill="#f0f921"/><circle cx="285.1" cy="178.7" r="0.85" fill="#db5c68"/><circle cx="269.1" cy="168.7" r="0.85" fill="#db5c68"/><circle cx="235.5" cy="143.0" r="0.85" fill="#db5c68"/><circle cx="276.3" cy="173.0" r="0.85" fill="#b83289"/><circle cx="267.3" cy="168.0" r="0.85" fill="#f0f921"/><circle cx="233.5" cy="147.1" r="0.85" fill="#febd2a"/><circle cx="249.8" cy="157.3" r="0.85" fill="#b83289"/><circle cx="239.5" cy="161.8" r="0.85" fill="#8b0aa5"/><circle cx="237.4" cy="144.0" r="0.85" fill="#8b0aa5"/><circle cx="307.2" cy="187.6" r="0.85" fill="#8b0aa5"/><circle cx="244.5" cy="148.0" r="0.85" fill="#f48849"/><circle cx="228.3" cy="138.7" r="0.85" fill="#febd2a"/><circle cx="336.2" cy="208.0" r="0.85" fill="#5302a3"/><circle cx="233.7" cy="141.9" r="0.85" fill="#f48849"/><circle cx="293.7" cy="178.0" r="0.85" fill="#f48849"/><circle cx="315.4" cy="190.3" r="0.85" fill="#f0f921"/><circle cx="316.6" cy="189.9" r="0.85" fill="#8b0aa5"/><circle cx="261.9" cy="159.6" r="0.85" fill="#f48849"/><circle cx="239.5" cy="154.2" r="0.85" fill="#b83289"/><circle cx="241.8" cy="146.5" r="0.85" fill="#f48849"/><circle cx="268.8" cy="167.7" r="0.85" fill="#b83289"/><circle cx="322.6" cy="196.7" r="0.85" fill="#8b0aa5"/><circle cx="227.7" cy="142.5" r="0.85" fill="#b83289"/><circle cx="295.1" cy="183.2" r="0.85" fill="#f0f921"/><circle cx="262.0" cy="161.0" r="0.85" fill="#febd2a"/><circle cx="269.1" cy="162.3" r="0.85" fill="#f48849"/><circle cx="299.9" cy="180.2" r="0.85" fill="#b83289"/><circle cx="254.8" cy="157.8" r="0.85" fill="#f48849"/><circle cx="284.9" cy="173.2" r="0.85" fill="#f48849"/><circle cx="254.8" cy="161.8" r="0.85" fill="#f48849"/><circle cx="276.9" cy="170.7" r="0.85" fill="#db5c68"/><circle cx="298.4" cy="186.9" r="0.85" fill="#f48849"/><circle cx="262.8" cy="160.5" r="0.85" fill="#5302a3"/><circle cx="309.8" cy="186.9" r="0.85" fill="#b83289"/><circle cx="310.6" cy="187.1" r="0.85" fill="#f48849"/><circle cx="263.4" cy="161.3" r="0.85" fill="#febd2a"/><circle cx="250.0" cy="159.8" r="0.85" fill="#db5c68"/><circle cx="294.4" cy="177.0" r="0.85" fill="#febd2a"/><circle cx="227.7" cy="138.3" r="0.85" fill="#db5c68"/><circle cx="251.6" cy="153.7" r="0.85" fill="#f0f921"/><circle cx="285.0" cy="172.4" r="0.85" fill="#f48849"/><circle cx="234.0" cy="144.2" r="0.85" fill="#f0f921"/><circle cx="323.9" cy="200.7" r="0.85" fill="#8b0aa5"/><circle cx="271.2" cy="164.3" r="0.85" fill="#b83289"/><circle cx="331.3" cy="205.4" r="0.85" fill="#db5c68"/><circle cx="281.2" cy="169.4" r="0.85" fill="#f48849"/><circle cx="250.7" cy="151.7" r="0.85" fill="#f48849"/><circle cx="306.0" cy="190.8" r="0.85" fill="#5302a3"/><circle cx="287.6" cy="183.3" r="0.85" fill="#db5c68"/><circle cx="237.2" cy="145.6" r="0.85" fill="#f48849"/><circle cx="289.8" cy="174.3" r="0.85" fill="#8b0aa5"/><circle cx="242.3" cy="150.6" r="0.85" fill="#5302a3"/><circle cx="264.7" cy="165.5" r="0.85" fill="#febd2a"/><circle cx="240.3" cy="152.1" r="0.85" fill="#b83289"/><circle cx="313.4" cy="195.5" r="0.85" fill="#f0f921"/><circle cx="266.9" cy="163.4" r="0.85" fill="#5302a3"/><circle cx="234.9" cy="150.6" r="0.85" fill="#5302a3"/><circle cx="226.1" cy="147.8" r="0.85" fill="#8b0aa5"/><circle cx="267.9" cy="167.0" r="0.85" fill="#8b0aa5"/><circle cx="227.9" cy="140.8" r="0.85" fill="#f48849"/><circle cx="250.2" cy="151.4" r="0.85" fill="#febd2a"/><circle cx="303.3" cy="186.6" r="0.85" fill="#febd2a"/><circle cx="227.6" cy="146.3" r="0.85" fill="#f48849"/><circle cx="312.7" cy="187.9" r="0.85" fill="#febd2a"/><circle cx="249.4" cy="157.2" r="0.85" fill="#febd2a"/><circle cx="306.9" cy="186.4" r="0.85" fill="#f0f921"/><circle cx="335.0" cy="206.5" r="0.85" fill="#5302a3"/><circle cx="256.1" cy="154.8" r="0.85" fill="#f48849"/><circle cx="246.1" cy="150.0" r="0.85" fill="#b83289"/><circle cx="311.8" cy="187.1" r="0.85" fill="#febd2a"/><circle cx="324.9" cy="199.1" r="0.85" fill="#f0f921"/><circle cx="233.9" cy="142.5" r="0.85" fill="#5302a3"/><circle cx="238.7" cy="144.7" r="0.85" fill="#f48849"/><circle cx="282.4" cy="176.1" r="0.85" fill="#f48849"/><circle cx="303.2" cy="190.2" r="0.85" fill="#5302a3"/><circle cx="251.8" cy="159.0" r="0.85" fill="#db5c68"/><circle cx="318.1" cy="190.8" r="0.85" fill="#5302a3"/><circle cx="247.9" cy="150.1" r="0.85" fill="#5302a3"/><circle cx="266.3" cy="166.6" r="0.85" fill="#8b0aa5"/><circle cx="304.6" cy="182.9" r="0.85" fill="#5302a3"/><circle cx="226.6" cy="144.5" r="0.85" fill="#f0f921"/><circle cx="339.0" cy="205.5" r="0.85" fill="#febd2a"/><circle cx="231.1" cy="141.7" r="0.85" fill="#b83289"/><circle cx="323.4" cy="193.8" r="0.85" fill="#8b0aa5"/><circle cx="338.2" cy="203.6" r="0.85" fill="#b83289"/><circle cx="318.5" cy="195.0" r="0.85" fill="#b83289"/><circle cx="261.1" cy="161.8" r="0.85" fill="#5302a3"/><circle cx="252.0" cy="155.9" r="0.85" fill="#5302a3"/><circle cx="245.6" cy="148.7" r="0.85" fill="#febd2a"/><circle cx="261.8" cy="164.4" r="0.85" fill="#5302a3"/><circle cx="227.6" cy="139.4" r="0.85" fill="#f0f921"/><circle cx="230.0" cy="140.6" r="0.85" fill="#febd2a"/><circle cx="279.7" cy="177.6" r="0.85" fill="#f0f921"/><circle cx="297.5" cy="180.3" r="0.85" fill="#8b0aa5"/><circle cx="251.7" cy="156.3" r="0.85" fill="#f48849"/><circle cx="264.1" cy="163.8" r="0.85" fill="#f0f921"/><circle cx="249.4" cy="150.9" r="0.85" fill="#f0f921"/><circle cx="335.9" cy="203.0" r="0.85" fill="#f0f921"/><circle cx="297.5" cy="178.8" r="0.85" fill="#8b0aa5"/><circle cx="279.9" cy="170.8" r="0.85" fill="#f48849"/><circle cx="253.5" cy="160.9" r="0.85" fill="#b83289"/><circle cx="309.0" cy="189.0" r="0.85" fill="#f48849"/><circle cx="234.0" cy="145.8" r="0.85" fill="#5302a3"/><circle cx="243.5" cy="156.6" r="0.85" fill="#8b0aa5"/><circle cx="242.0" cy="157.0" r="0.85" fill="#febd2a"/><circle cx="290.5" cy="181.2" r="0.85" fill="#febd2a"/><circle cx="265.5" cy="161.9" r="0.85" fill="#b83289"/><circle cx="245.8" cy="156.2" r="0.85" fill="#db5c68"/><circle cx="277.3" cy="173.1" r="0.85" fill="#f48849"/><circle cx="261.1" cy="167.4" r="0.85" fill="#b83289"/><circle cx="254.7" cy="161.4" r="0.85" fill="#db5c68"/><circle cx="321.7" cy="192.8" r="0.85" fill="#b83289"/><circle cx="238.2" cy="147.3" r="0.85" fill="#db5c68"/><circle cx="252.3" cy="152.6" r="0.85" fill="#8b0aa5"/><circle cx="241.1" cy="148.0" r="0.85" fill="#febd2a"/><circle cx="252.0" cy="160.5" r="0.85" fill="#8b0aa5"/><circle cx="245.9" cy="158.9" r="0.85" fill="#db5c68"/><circle cx="269.1" cy="166.9" r="0.85" fill="#f0f921"/><circle cx="265.3" cy="163.8" r="0.85" fill="#db5c68"/><circle cx="327.7" cy="199.6" r="0.85" fill="#f0f921"/><circle cx="310.5" cy="191.4" r="0.85" fill="#db5c68"/><circle cx="315.2" cy="189.1" r="0.85" fill="#5302a3"/><circle cx="226.2" cy="152.9" r="0.85" fill="#f48849"/><circle cx="264.5" cy="168.0" r="0.85" fill="#f48849"/><circle cx="327.7" cy="196.3" r="0.85" fill="#5302a3"/><circle cx="242.4" cy="146.8" r="0.85" fill="#febd2a"/><circle cx="255.3" cy="155.6" r="0.85" fill="#b83289"/><circle cx="252.4" cy="156.8" r="0.85" fill="#db5c68"/><circle cx="329.3" cy="205.8" r="0.85" fill="#febd2a"/><circle cx="324.1" cy="198.3" r="0.85" fill="#febd2a"/><circle cx="228.7" cy="141.3" r="0.85" fill="#5302a3"/><circle cx="330.1" cy="200.1" r="0.85" fill="#8b0aa5"/><circle cx="264.0" cy="160.0" r="0.85" fill="#f48849"/><circle cx="232.4" cy="142.0" r="0.85" fill="#8b0aa5"/><circle cx="325.7" cy="199.0" r="0.85" fill="#f48849"/><circle cx="295.6" cy="181.6" r="0.85" fill="#b83289"/><circle cx="229.3" cy="143.9" r="0.85" fill="#f48849"/><circle cx="321.3" cy="198.4" r="0.85" fill="#f48849"/><circle cx="313.8" cy="194.6" r="0.85" fill="#f48849"/><circle cx="335.5" cy="203.4" r="0.85" fill="#f48849"/><circle cx="232.6" cy="147.5" r="0.85" fill="#5302a3"/><circle cx="236.3" cy="143.3" r="0.85" fill="#8b0aa5"/><circle cx="242.1" cy="152.9" r="0.85" fill="#8b0aa5"/><circle cx="228.0" cy="138.8" r="0.85" fill="#db5c68"/><circle cx="266.1" cy="162.8" r="0.85" fill="#febd2a"/><circle cx="231.1" cy="145.3" r="0.85" fill="#b83289"/><circle cx="274.4" cy="168.8" r="0.85" fill="#8b0aa5"/><circle cx="241.6" cy="151.1" r="0.85" fill="#b83289"/><circle cx="327.0" cy="202.4" r="0.85" fill="#db5c68"/><circle cx="256.6" cy="162.6" r="0.85" fill="#8b0aa5"/><circle cx="334.8" cy="212.9" r="0.85" fill="#febd2a"/><circle cx="249.5" cy="154.7" r="0.85" fill="#febd2a"/><circle cx="244.3" cy="151.7" r="0.85" fill="#5302a3"/><circle cx="325.3" cy="199.3" r="0.85" fill="#b83289"/><circle cx="268.7" cy="170.6" r="0.85" fill="#b83289"/><circle cx="236.6" cy="148.6" r="0.85" fill="#febd2a"/><circle cx="301.9" cy="185.6" r="0.85" fill="#8b0aa5"/><circle cx="281.5" cy="171.3" r="0.85" fill="#b83289"/><circle cx="227.8" cy="138.4" r="0.85" fill="#febd2a"/><circle cx="256.5" cy="158.4" r="0.85" fill="#db5c68"/><circle cx="244.1" cy="150.1" r="0.85" fill="#febd2a"/><circle cx="230.7" cy="140.1" r="0.85" fill="#db5c68"/><circle cx="240.3" cy="153.0" r="0.85" fill="#f48849"/><circle cx="228.1" cy="140.5" r="0.85" fill="#f48849"/><circle cx="270.0" cy="162.8" r="0.85" fill="#febd2a"/><circle cx="229.5" cy="140.9" r="0.85" fill="#db5c68"/><circle cx="304.3" cy="188.4" r="0.85" fill="#f0f921"/><circle cx="299.4" cy="190.1" r="0.85" fill="#febd2a"/><circle cx="259.7" cy="165.9" r="0.85" fill="#febd2a"/><circle cx="232.6" cy="144.8" r="0.85" fill="#b83289"/><circle cx="230.4" cy="145.3" r="0.85" fill="#5302a3"/><circle cx="226.2" cy="147.4" r="0.85" fill="#f0f921"/><circle cx="284.9" cy="172.4" r="0.85" fill="#b83289"/><circle cx="292.5" cy="185.3" r="0.85" fill="#5302a3"/><circle cx="242.2" cy="155.4" r="0.85" fill="#f0f921"/><circle cx="267.1" cy="164.4" r="0.85" fill="#8b0aa5"/><circle cx="271.7" cy="169.3" r="0.85" fill="#b83289"/><circle cx="234.0" cy="142.0" r="0.85" fill="#5302a3"/><circle cx="330.0" cy="198.9" r="0.85" fill="#f48849"/><circle cx="279.3" cy="171.0" r="0.85" fill="#5302a3"/><circle cx="304.5" cy="185.8" r="0.85" fill="#b83289"/><circle cx="314.0" cy="190.6" r="0.85" fill="#db5c68"/><circle cx="310.8" cy="186.5" r="0.85" fill="#5302a3"/><circle cx="247.3" cy="157.0" r="0.85" fill="#f48849"/><circle cx="286.6" cy="183.9" r="0.85" fill="#8b0aa5"/><circle cx="270.0" cy="170.2" r="0.85" fill="#5302a3"/><circle cx="238.8" cy="150.2" r="0.85" fill="#f48849"/><circle cx="303.5" cy="190.4" r="0.85" fill="#5302a3"/><circle cx="228.1" cy="139.8" r="0.85" fill="#db5c68"/><circle cx="327.0" cy="196.2" r="0.85" fill="#5302a3"/><circle cx="283.0" cy="170.4" r="0.85" fill="#febd2a"/><circle cx="227.2" cy="141.7" r="0.85" fill="#f48849"/><circle cx="285.7" cy="176.6" r="0.85" fill="#f0f921"/><circle cx="332.1" cy="208.3" r="0.85" fill="#f0f921"/><circle cx="271.7" cy="163.8" r="0.85" fill="#8b0aa5"/><circle cx="267.2" cy="171.3" r="0.85" fill="#db5c68"/><circle cx="241.2" cy="146.2" r="0.85" fill="#febd2a"/><circle cx="245.0" cy="148.4" r="0.85" fill="#f48849"/><circle cx="236.9" cy="149.1" r="0.85" fill="#f48849"/><circle cx="322.4" cy="195.6" r="0.85" fill="#5302a3"/><circle cx="239.7" cy="153.4" r="0.85" fill="#febd2a"/><circle cx="271.9" cy="171.3" r="0.85" fill="#b83289"/><circle cx="317.5" cy="193.3" r="0.85" fill="#febd2a"/><circle cx="248.2" cy="152.7" r="0.85" fill="#5302a3"/><circle cx="302.4" cy="192.3" r="0.85" fill="#5302a3"/><circle cx="280.9" cy="169.6" r="0.85" fill="#f48849"/><circle cx="249.9" cy="159.7" r="0.85" fill="#febd2a"/><circle cx="237.9" cy="154.5" r="0.85" fill="#db5c68"/><circle cx="289.0" cy="175.9" r="0.85" fill="#b83289"/><circle cx="280.9" cy="176.8" r="0.85" fill="#febd2a"/><circle cx="243.4" cy="147.4" r="0.85" fill="#8b0aa5"/><circle cx="256.4" cy="161.8" r="0.85" fill="#8b0aa5"/><circle cx="266.3" cy="166.7" r="0.85" fill="#f0f921"/><circle cx="233.2" cy="147.1" r="0.85" fill="#8b0aa5"/><circle cx="253.9" cy="154.4" r="0.85" fill="#f48849"/><circle cx="244.9" cy="149.5" r="0.85" fill="#f0f921"/><circle cx="253.4" cy="159.8" r="0.85" fill="#febd2a"/><circle cx="253.8" cy="155.5" r="0.85" fill="#f48849"/><circle cx="275.5" cy="174.1" r="0.85" fill="#5302a3"/><circle cx="311.8" cy="187.1" r="0.85" fill="#b83289"/><circle cx="331.8" cy="209.5" r="0.85" fill="#f48849"/><circle cx="322.0" cy="197.3" r="0.85" fill="#febd2a"/><circle cx="245.6" cy="152.0" r="0.85" fill="#db5c68"/><circle cx="270.8" cy="171.5" r="0.85" fill="#f48849"/><circle cx="254.5" cy="157.4" r="0.85" fill="#f0f921"/><circle cx="289.9" cy="177.5" r="0.85" fill="#b83289"/><circle cx="230.5" cy="143.7" r="0.85" fill="#f48849"/><circle cx="285.7" cy="177.4" r="0.85" fill="#f48849"/><circle cx="265.5" cy="162.9" r="0.85" fill="#f0f921"/><circle cx="324.0" cy="194.1" r="0.85" fill="#5302a3"/><circle cx="235.6" cy="143.1" r="0.85" fill="#5302a3"/><circle cx="312.1" cy="189.2" r="0.85" fill="#db5c68"/><circle cx="311.0" cy="190.1" r="0.85" fill="#f48849"/><circle cx="284.3" cy="171.1" r="0.85" fill="#b83289"/><circle cx="257.1" cy="157.8" r="0.85" fill="#f0f921"/><circle cx="280.6" cy="169.0" r="0.85" fill="#5302a3"/><circle cx="289.1" cy="193.9" r="0.85" fill="#5302a3"/><circle cx="246.2" cy="152.5" r="0.85" fill="#8b0aa5"/><circle cx="277.8" cy="170.6" r="0.85" fill="#b83289"/><circle cx="235.2" cy="146.9" r="0.85" fill="#febd2a"/><circle cx="269.3" cy="162.5" r="0.85" fill="#b83289"/><circle cx="256.5" cy="160.3" r="0.85" fill="#8b0aa5"/><circle cx="227.2" cy="143.4" r="0.85" fill="#febd2a"/><circle cx="266.4" cy="160.8" r="0.85" fill="#5302a3"/><circle cx="290.9" cy="179.3" r="0.85" fill="#8b0aa5"/><circle cx="295.6" cy="180.0" r="0.85" fill="#8b0aa5"/><circle cx="316.7" cy="195.1" r="0.85" fill="#5302a3"/><circle cx="250.9" cy="151.8" r="0.85" fill="#f48849"/><circle cx="277.1" cy="171.7" r="0.85" fill="#f48849"/><circle cx="228.4" cy="142.5" r="0.85" fill="#f0f921"/><circle cx="315.9" cy="195.4" r="0.85" fill="#f48849"/><circle cx="246.6" cy="149.3" r="0.85" fill="#5302a3"/><circle cx="241.2" cy="146.1" r="0.85" fill="#f0f921"/><circle cx="239.3" cy="145.5" r="0.85" fill="#b83289"/><circle cx="228.5" cy="150.6" r="0.85" fill="#f48849"/><circle cx="235.5" cy="149.9" r="0.85" fill="#8b0aa5"/><circle cx="249.0" cy="153.7" r="0.85" fill="#db5c68"/><circle cx="255.6" cy="160.0" r="0.85" fill="#f48849"/><circle cx="273.4" cy="169.2" r="0.85" fill="#f48849"/><circle cx="244.0" cy="151.5" r="0.85" fill="#db5c68"/><circle cx="308.4" cy="189.6" r="0.85" fill="#8b0aa5"/><circle cx="230.4" cy="142.4" r="0.85" fill="#f48849"/><circle cx="261.7" cy="169.1" r="0.85" fill="#b83289"/><circle cx="234.8" cy="142.5" r="0.85" fill="#f0f921"/><circle cx="236.8" cy="152.6" r="0.85" fill="#febd2a"/><circle cx="236.7" cy="151.1" r="0.85" fill="#db5c68"/><circle cx="279.6" cy="168.4" r="0.85" fill="#f48849"/><circle cx="271.8" cy="163.9" r="0.85" fill="#8b0aa5"/><circle cx="289.6" cy="180.3" r="0.85" fill="#db5c68"/><circle cx="298.3" cy="182.9" r="0.85" fill="#8b0aa5"/><circle cx="246.8" cy="152.0" r="0.85" fill="#5302a3"/><circle cx="292.3" cy="179.8" r="0.85" fill="#8b0aa5"/><circle cx="229.6" cy="139.9" r="0.85" fill="#febd2a"/><circle cx="301.3" cy="186.5" r="0.85" fill="#db5c68"/><circle cx="230.9" cy="150.2" r="0.85" fill="#db5c68"/><circle cx="250.5" cy="157.7" r="0.85" fill="#8b0aa5"/><circle cx="330.0" cy="198.3" r="0.85" fill="#f48849"/><circle cx="290.6" cy="176.6" r="0.85" fill="#f48849"/><circle cx="241.6" cy="146.6" r="0.85" fill="#f48849"/><circle cx="324.1" cy="200.0" r="0.85" fill="#f0f921"/><circle cx="297.8" cy="184.2" r="0.85" fill="#5302a3"/><circle cx="256.7" cy="155.4" r="0.85" fill="#8b0aa5"/><circle cx="254.2" cy="153.7" r="0.85" fill="#db5c68"/><circle cx="282.6" cy="178.2" r="0.85" fill="#febd2a"/><circle cx="295.8" cy="179.8" r="0.85" fill="#f48849"/><circle cx="289.6" cy="174.2" r="0.85" fill="#db5c68"/><circle cx="324.3" cy="194.4" r="0.85" fill="#f0f921"/><circle cx="280.0" cy="174.9" r="0.85" fill="#db5c68"/><circle cx="237.7" cy="148.6" r="0.85" fill="#5302a3"/><circle cx="257.6" cy="158.7" r="0.85" fill="#b83289"/><circle cx="244.5" cy="148.1" r="0.85" fill="#f48849"/><circle cx="260.7" cy="158.5" r="0.85" fill="#f48849"/><circle cx="267.3" cy="168.7" r="0.85" fill="#b83289"/><circle cx="259.3" cy="156.7" r="0.85" fill="#b83289"/><circle cx="228.2" cy="141.4" r="0.85" fill="#febd2a"/><circle cx="242.7" cy="147.0" r="0.85" fill="#febd2a"/><circle cx="242.6" cy="147.4" r="0.85" fill="#b83289"/><circle cx="251.6" cy="153.4" r="0.85" fill="#8b0aa5"/><circle cx="291.0" cy="179.9" r="0.85" fill="#febd2a"/><circle cx="240.1" cy="149.3" r="0.85" fill="#f48849"/><circle cx="292.1" cy="183.6" r="0.85" fill="#8b0aa5"/><circle cx="277.8" cy="171.3" r="0.85" fill="#f48849"/><circle cx="301.1" cy="189.3" r="0.85" fill="#8b0aa5"/><circle cx="280.0" cy="168.6" r="0.85" fill="#8b0aa5"/><circle cx="291.3" cy="181.4" r="0.85" fill="#febd2a"/><circle cx="237.0" cy="150.5" r="0.85" fill="#db5c68"/><circle cx="260.7" cy="162.2" r="0.85" fill="#db5c68"/><circle cx="261.1" cy="158.3" r="0.85" fill="#5302a3"/><circle cx="227.4" cy="140.2" r="0.85" fill="#febd2a"/><circle cx="230.2" cy="140.9" r="0.85" fill="#8b0aa5"/><circle cx="286.2" cy="172.2" r="0.85" fill="#febd2a"/><circle cx="236.4" cy="146.4" r="0.85" fill="#db5c68"/><circle cx="283.2" cy="174.0" r="0.85" fill="#db5c68"/><circle cx="284.9" cy="184.7" r="0.85" fill="#f48849"/><circle cx="313.5" cy="194.2" r="0.85" fill="#b83289"/><circle cx="334.3" cy="200.1" r="0.85" fill="#8b0aa5"/><circle cx="305.7" cy="186.0" r="0.85" fill="#f0f921"/><circle cx="247.5" cy="156.5" r="0.85" fill="#f48849"/><circle cx="231.4" cy="151.4" r="0.85" fill="#db5c68"/><circle cx="239.3" cy="153.9" r="0.85" fill="#f48849"/><circle cx="324.1" cy="198.9" r="0.85" fill="#febd2a"/><circle cx="258.4" cy="158.1" r="0.85" fill="#5302a3"/><circle cx="233.7" cy="141.8" r="0.85" fill="#8b0aa5"/><circle cx="259.8" cy="163.5" r="0.85" fill="#f48849"/><circle cx="264.6" cy="163.0" r="0.85" fill="#f48849"/><circle cx="226.2" cy="145.7" r="0.85" fill="#f48849"/><circle cx="233.8" cy="141.8" r="0.85" fill="#5302a3"/><circle cx="269.3" cy="162.9" r="0.85" fill="#b83289"/><circle cx="323.9" cy="199.0" r="0.85" fill="#db5c68"/><circle cx="226.6" cy="143.5" r="0.85" fill="#febd2a"/><circle cx="230.4" cy="139.9" r="0.85" fill="#f48849"/><circle cx="259.3" cy="156.7" r="0.85" fill="#f48849"/><circle cx="333.8" cy="202.4" r="0.85" fill="#5302a3"/><circle cx="296.9" cy="179.5" r="0.85" fill="#f48849"/><circle cx="331.4" cy="206.0" r="0.85" fill="#8b0aa5"/><circle cx="246.1" cy="149.0" r="0.85" fill="#b83289"/><circle cx="237.5" cy="154.9" r="0.85" fill="#5302a3"/><circle cx="234.0" cy="142.0" r="0.85" fill="#f48849"/><circle cx="271.0" cy="164.7" r="0.85" fill="#f48849"/><circle cx="241.8" cy="151.6" r="0.85" fill="#8b0aa5"/><circle cx="236.8" cy="158.2" r="0.85" fill="#8b0aa5"/><circle cx="236.8" cy="143.9" r="0.85" fill="#f48849"/><circle cx="239.8" cy="145.4" r="0.85" fill="#8b0aa5"/><circle cx="297.6" cy="186.3" r="0.85" fill="#5302a3"/><circle cx="308.3" cy="186.3" r="0.85" fill="#febd2a"/><circle cx="273.4" cy="167.0" r="0.85" fill="#febd2a"/><circle cx="231.3" cy="140.4" r="0.85" fill="#f48849"/><circle cx="271.9" cy="170.0" r="0.85" fill="#5302a3"/><circle cx="232.8" cy="144.3" r="0.85" fill="#5302a3"/><circle cx="255.9" cy="159.3" r="0.85" fill="#b83289"/><circle cx="262.2" cy="162.2" r="0.85" fill="#8b0aa5"/><circle cx="257.7" cy="163.5" r="0.85" fill="#f0f921"/><circle cx="232.0" cy="140.8" r="0.85" fill="#f48849"/><circle cx="234.8" cy="145.9" r="0.85" fill="#5302a3"/><circle cx="312.3" cy="187.9" r="0.85" fill="#f48849"/><circle cx="269.2" cy="162.4" r="0.85" fill="#f0f921"/><circle cx="250.9" cy="154.7" r="0.85" fill="#db5c68"/><circle cx="307.3" cy="193.9" r="0.85" fill="#db5c68"/><circle cx="249.8" cy="160.7" r="0.85" fill="#5302a3"/><circle cx="314.2" cy="189.4" r="0.85" fill="#8b0aa5"/><circle cx="229.4" cy="141.9" r="0.85" fill="#8b0aa5"/><circle cx="273.9" cy="167.2" r="0.85" fill="#8b0aa5"/><circle cx="277.0" cy="176.0" r="0.85" fill="#db5c68"/><circle cx="330.9" cy="204.6" r="0.85" fill="#febd2a"/><circle cx="264.9" cy="164.1" r="0.85" fill="#5302a3"/><circle cx="229.9" cy="139.6" r="0.85" fill="#febd2a"/><circle cx="335.1" cy="201.1" r="0.85" fill="#f48849"/><circle cx="254.2" cy="161.1" r="0.85" fill="#db5c68"/><circle cx="271.0" cy="163.4" r="0.85" fill="#8b0aa5"/><circle cx="277.7" cy="173.1" r="0.85" fill="#f48849"/><circle cx="248.4" cy="154.6" r="0.85" fill="#f48849"/><circle cx="247.4" cy="150.9" r="0.85" fill="#b83289"/><circle cx="261.5" cy="165.4" r="0.85" fill="#5302a3"/><circle cx="283.7" cy="174.1" r="0.85" fill="#5302a3"/><circle cx="267.3" cy="162.7" r="0.85" fill="#f0f921"/><circle cx="276.4" cy="168.3" r="0.85" fill="#febd2a"/><circle cx="324.1" cy="196.9" r="0.85" fill="#b83289"/><circle cx="304.6" cy="183.2" r="0.85" fill="#db5c68"/><circle cx="307.4" cy="184.6" r="0.85" fill="#8b0aa5"/><circle cx="290.9" cy="176.5" r="0.85" fill="#febd2a"/><circle cx="315.1" cy="197.9" r="0.85" fill="#febd2a"/><circle cx="295.9" cy="178.6" r="0.85" fill="#febd2a"/><circle cx="266.5" cy="169.6" r="0.85" fill="#b83289"/><circle cx="339.2" cy="207.8" r="0.85" fill="#f48849"/><circle cx="255.7" cy="160.4" r="0.85" fill="#db5c68"/><circle cx="328.5" cy="198.8" r="0.85" fill="#db5c68"/><circle cx="297.2" cy="181.2" r="0.85" fill="#db5c68"/><circle cx="228.6" cy="146.0" r="0.85" fill="#db5c68"/><circle cx="275.5" cy="177.6" r="0.85" fill="#f48849"/><circle cx="335.4" cy="202.5" r="0.85" fill="#febd2a"/><circle cx="248.0" cy="150.1" r="0.85" fill="#db5c68"/><circle cx="272.6" cy="168.2" r="0.85" fill="#5302a3"/><circle cx="239.2" cy="145.0" r="0.85" fill="#b83289"/><circle cx="322.5" cy="196.1" r="0.85" fill="#b83289"/><circle cx="297.3" cy="186.3" r="0.85" fill="#f0f921"/><circle cx="226.9" cy="148.6" r="0.85" fill="#8b0aa5"/><circle cx="226.4" cy="144.7" r="0.85" fill="#5302a3"/><circle cx="284.4" cy="177.0" r="0.85" fill="#5302a3"/><circle cx="286.3" cy="174.7" r="0.85" fill="#db5c68"/><circle cx="234.3" cy="150.7" r="0.85" fill="#f0f921"/><circle cx="249.5" cy="151.0" r="0.85" fill="#f0f921"/><circle cx="253.1" cy="170.3" r="0.85" fill="#db5c68"/><circle cx="275.4" cy="166.7" r="0.85" fill="#5302a3"/><circle cx="257.6" cy="157.3" r="0.85" fill="#5302a3"/><circle cx="234.6" cy="142.3" r="0.85" fill="#5302a3"/><circle cx="251.6" cy="153.4" r="0.85" fill="#febd2a"/><circle cx="233.3" cy="148.1" r="0.85" fill="#f0f921"/><circle cx="248.5" cy="153.8" r="0.85" fill="#5302a3"/><circle cx="304.7" cy="183.9" r="0.85" fill="#febd2a"/><circle cx="336.6" cy="202.7" r="0.85" fill="#db5c68"/><circle cx="232.1" cy="146.3" r="0.85" fill="#febd2a"/><circle cx="229.8" cy="147.4" r="0.85" fill="#b83289"/><circle cx="256.3" cy="154.9" r="0.85" fill="#5302a3"/><circle cx="282.2" cy="176.8" r="0.85" fill="#b83289"/><circle cx="241.3" cy="153.4" r="0.85" fill="#8b0aa5"/><circle cx="323.2" cy="201.6" r="0.85" fill="#febd2a"/><circle cx="228.2" cy="138.6" r="0.85" fill="#b83289"/><circle cx="259.8" cy="162.3" r="0.85" fill="#f48849"/><circle cx="262.6" cy="160.1" r="0.85" fill="#5302a3"/><circle cx="231.0" cy="143.7" r="0.85" fill="#f48849"/><circle cx="289.8" cy="176.6" r="0.85" fill="#b83289"/><circle cx="275.5" cy="166.1" r="0.85" fill="#b83289"/><circle cx="225.9" cy="150.3" r="0.85" fill="#f48849"/><circle cx="240.8" cy="147.3" r="0.85" fill="#db5c68"/><circle cx="244.9" cy="154.8" r="0.85" fill="#b83289"/><circle cx="336.7" cy="206.0" r="0.85" fill="#db5c68"/><circle cx="333.0" cy="199.5" r="0.85" fill="#db5c68"/><circle cx="244.4" cy="149.2" r="0.85" fill="#b83289"/><circle cx="246.7" cy="157.1" r="0.85" fill="#f48849"/><circle cx="236.8" cy="154.2" r="0.85" fill="#f48849"/><circle cx="227.7" cy="144.3" r="0.85" fill="#f48849"/><circle cx="234.2" cy="154.7" r="0.85" fill="#5302a3"/><circle cx="309.3" cy="185.6" r="0.85" fill="#5302a3"/><circle cx="232.8" cy="143.2" r="0.85" fill="#b83289"/><circle cx="262.0" cy="166.2" r="0.85" fill="#f48849"/><circle cx="248.3" cy="159.5" r="0.85" fill="#5302a3"/><circle cx="278.1" cy="168.2" r="0.85" fill="#5302a3"/><circle cx="228.4" cy="139.2" r="0.85" fill="#8b0aa5"/><circle cx="297.3" cy="182.1" r="0.85" fill="#db5c68"/><circle cx="227.4" cy="150.1" r="0.85" fill="#febd2a"/><circle cx="257.5" cy="165.6" r="0.85" fill="#febd2a"/><circle cx="233.5" cy="144.9" r="0.85" fill="#f48849"/><circle cx="314.6" cy="188.7" r="0.85" fill="#5302a3"/><circle cx="249.9" cy="157.1" r="0.85" fill="#5302a3"/><circle cx="241.2" cy="160.4" r="0.85" fill="#db5c68"/><circle cx="241.9" cy="155.0" r="0.85" fill="#febd2a"/><circle cx="332.0" cy="201.9" r="0.85" fill="#db5c68"/><circle cx="292.0" cy="176.6" r="0.85" fill="#f48849"/><circle cx="337.6" cy="202.4" r="0.85" fill="#db5c68"/><circle cx="255.8" cy="156.5" r="0.85" fill="#f48849"/><circle cx="301.4" cy="187.9" r="0.85" fill="#8b0aa5"/><circle cx="323.5" cy="195.8" r="0.85" fill="#db5c68"/><circle cx="292.6" cy="177.6" r="0.85" fill="#b83289"/><circle cx="311.9" cy="190.0" r="0.85" fill="#5302a3"/><circle cx="325.2" cy="196.3" r="0.85" fill="#febd2a"/><circle cx="248.4" cy="150.8" r="0.85" fill="#f0f921"/><circle cx="227.6" cy="138.3" r="0.85" fill="#febd2a"/><circle cx="268.8" cy="162.2" r="0.85" fill="#f48849"/><circle cx="251.6" cy="152.2" r="0.85" fill="#febd2a"/><circle cx="243.2" cy="147.3" r="0.85" fill="#febd2a"/><circle cx="288.8" cy="173.8" r="0.85" fill="#db5c68"/><circle cx="241.4" cy="154.3" r="0.85" fill="#f0f921"/><circle cx="264.8" cy="159.9" r="0.85" fill="#8b0aa5"/><circle cx="228.9" cy="142.8" r="0.85" fill="#b83289"/><circle cx="310.5" cy="186.7" r="0.85" fill="#b83289"/><circle cx="234.0" cy="144.1" r="0.85" fill="#5302a3"/><circle cx="248.0" cy="151.5" r="0.85" fill="#f48849"/><circle cx="231.5" cy="146.0" r="0.85" fill="#f48849"/><circle cx="287.6" cy="178.9" r="0.85" fill="#db5c68"/><circle cx="260.8" cy="164.5" r="0.85" fill="#8b0aa5"/><circle cx="260.7" cy="163.1" r="0.85" fill="#b83289"/><circle cx="301.1" cy="187.6" r="0.85" fill="#febd2a"/><circle cx="286.8" cy="180.6" r="0.85" fill="#febd2a"/><circle cx="249.5" cy="154.0" r="0.85" fill="#f0f921"/><circle cx="241.9" cy="150.6" r="0.85" fill="#db5c68"/><circle cx="295.9" cy="180.9" r="0.85" fill="#f48849"/><circle cx="229.4" cy="146.7" r="0.85" fill="#5302a3"/><circle cx="237.9" cy="144.2" r="0.85" fill="#f48849"/><circle cx="326.3" cy="201.7" r="0.85" fill="#f48849"/><circle cx="252.3" cy="155.4" r="0.85" fill="#f0f921"/><circle cx="310.0" cy="186.8" r="0.85" fill="#f48849"/><circle cx="314.9" cy="195.6" r="0.85" fill="#f0f921"/><circle cx="251.9" cy="160.0" r="0.85" fill="#db5c68"/><circle cx="316.6" cy="196.6" r="0.85" fill="#f48849"/><circle cx="266.2" cy="166.2" r="0.85" fill="#5302a3"/><circle cx="231.6" cy="140.6" r="0.85" fill="#f48849"/><circle cx="257.8" cy="155.8" r="0.85" fill="#5302a3"/><circle cx="260.6" cy="157.4" r="0.85" fill="#b83289"/><circle cx="299.0" cy="183.4" r="0.85" fill="#5302a3"/><circle cx="327.8" cy="199.1" r="0.85" fill="#f48849"/><circle cx="230.9" cy="147.5" r="0.85" fill="#5302a3"/><circle cx="275.0" cy="173.7" r="0.85" fill="#b83289"/><circle cx="274.8" cy="169.7" r="0.85" fill="#b83289"/><circle cx="295.0" cy="179.7" r="0.85" fill="#f48849"/><circle cx="314.5" cy="192.4" r="0.85" fill="#f48849"/><circle cx="310.2" cy="191.0" r="0.85" fill="#febd2a"/><circle cx="337.2" cy="204.1" r="0.85" fill="#febd2a"/><circle cx="243.3" cy="150.7" r="0.85" fill="#db5c68"/><circle cx="273.2" cy="171.6" r="0.85" fill="#f48849"/><circle cx="290.7" cy="177.5" r="0.85" fill="#f48849"/><circle cx="316.2" cy="195.5" r="0.85" fill="#b83289"/><circle cx="232.1" cy="146.1" r="0.85" fill="#febd2a"/><circle cx="293.7" cy="185.2" r="0.85" fill="#db5c68"/><circle cx="236.3" cy="151.6" r="0.85" fill="#db5c68"/><circle cx="227.6" cy="139.1" r="0.85" fill="#f0f921"/><circle cx="311.0" cy="192.5" r="0.85" fill="#b83289"/><circle cx="294.6" cy="181.2" r="0.85" fill="#f0f921"/><circle cx="281.6" cy="169.6" r="0.85" fill="#b83289"/><circle cx="227.9" cy="145.9" r="0.85" fill="#8b0aa5"/><circle cx="228.0" cy="143.2" r="0.85" fill="#b83289"/><circle cx="227.4" cy="140.5" r="0.85" fill="#b83289"/><circle cx="267.2" cy="162.1" r="0.85" fill="#b83289"/><circle cx="271.8" cy="163.9" r="0.85" fill="#b83289"/><circle cx="269.4" cy="163.5" r="0.85" fill="#5302a3"/><circle cx="257.1" cy="159.5" r="0.85" fill="#db5c68"/><circle cx="294.7" cy="177.2" r="0.85" fill="#8b0aa5"/><circle cx="227.7" cy="143.5" r="0.85" fill="#db5c68"/><circle cx="300.8" cy="188.7" r="0.85" fill="#8b0aa5"/><circle cx="247.1" cy="149.6" r="0.85" fill="#febd2a"/><circle cx="313.6" cy="195.1" r="0.85" fill="#f48849"/><circle cx="334.8" cy="208.5" r="0.85" fill="#8b0aa5"/><circle cx="284.8" cy="175.8" r="0.85" fill="#f48849"/><circle cx="232.5" cy="150.0" r="0.85" fill="#db5c68"/><circle cx="289.3" cy="182.7" r="0.85" fill="#b83289"/><circle cx="338.7" cy="210.0" r="0.85" fill="#febd2a"/><circle cx="229.4" cy="142.1" r="0.85" fill="#5302a3"/><circle cx="237.1" cy="147.4" r="0.85" fill="#db5c68"/><circle cx="279.5" cy="170.4" r="0.85" fill="#db5c68"/><circle cx="303.1" cy="185.2" r="0.85" fill="#b83289"/><circle cx="277.0" cy="169.0" r="0.85" fill="#5302a3"/><circle cx="248.9" cy="159.3" r="0.85" fill="#db5c68"/><circle cx="228.7" cy="140.1" r="0.85" fill="#f48849"/><circle cx="234.8" cy="150.1" r="0.85" fill="#db5c68"/><circle cx="309.3" cy="188.6" r="0.85" fill="#8b0aa5"/><circle cx="306.7" cy="184.1" r="0.85" fill="#f48849"/><circle cx="226.8" cy="146.9" r="0.85" fill="#8b0aa5"/><circle cx="257.0" cy="160.2" r="0.85" fill="#5302a3"/><circle cx="253.1" cy="155.4" r="0.85" fill="#5302a3"/><circle cx="249.0" cy="152.1" r="0.85" fill="#febd2a"/><circle cx="245.9" cy="152.3" r="0.85" fill="#8b0aa5"/><circle cx="266.2" cy="166.0" r="0.85" fill="#8b0aa5"/><circle cx="247.8" cy="153.8" r="0.85" fill="#db5c68"/><circle cx="251.2" cy="160.8" r="0.85" fill="#f48849"/><circle cx="272.3" cy="176.1" r="0.85" fill="#febd2a"/><circle cx="267.3" cy="164.2" r="0.85" fill="#5302a3"/><circle cx="229.6" cy="150.2" r="0.85" fill="#b83289"/><circle cx="291.2" cy="180.9" r="0.85" fill="#b83289"/><circle cx="233.8" cy="145.4" r="0.85" fill="#febd2a"/><circle cx="230.9" cy="144.8" r="0.85" fill="#8b0aa5"/><circle cx="230.3" cy="140.6" r="0.85" fill="#febd2a"/><circle cx="294.9" cy="179.6" r="0.85" fill="#b83289"/><circle cx="229.4" cy="141.9" r="0.85" fill="#b83289"/><circle cx="309.9" cy="190.8" r="0.85" fill="#f48849"/><circle cx="278.2" cy="172.5" r="0.85" fill="#f48849"/><circle cx="227.0" cy="145.0" r="0.85" fill="#8b0aa5"/><circle cx="298.2" cy="181.9" r="0.85" fill="#8b0aa5"/><circle cx="237.8" cy="145.6" r="0.85" fill="#db5c68"/><circle cx="294.4" cy="180.8" r="0.85" fill="#5302a3"/><circle cx="266.6" cy="164.6" r="0.85" fill="#5302a3"/><circle cx="300.9" cy="182.8" r="0.85" fill="#f48849"/><circle cx="306.1" cy="185.6" r="0.85" fill="#f48849"/><circle cx="277.0" cy="171.9" r="0.85" fill="#febd2a"/><circle cx="233.2" cy="141.5" r="0.85" fill="#db5c68"/><circle cx="324.3" cy="197.7" r="0.85" fill="#f0f921"/><circle cx="235.2" cy="142.7" r="0.85" fill="#febd2a"/><circle cx="244.6" cy="156.6" r="0.85" fill="#8b0aa5"/><circle cx="229.2" cy="141.5" r="0.85" fill="#db5c68"/><circle cx="300.2" cy="185.4" r="0.85" fill="#febd2a"/><circle cx="240.5" cy="146.8" r="0.85" fill="#5302a3"/><circle cx="254.5" cy="158.9" r="0.85" fill="#db5c68"/><circle cx="312.4" cy="187.5" r="0.85" fill="#5302a3"/><circle cx="240.0" cy="145.5" r="0.85" fill="#f48849"/><circle cx="307.4" cy="184.5" r="0.85" fill="#febd2a"/><circle cx="278.7" cy="178.8" r="0.85" fill="#f48849"/><circle cx="280.6" cy="170.2" r="0.85" fill="#db5c68"/><circle cx="271.9" cy="170.9" r="0.85" fill="#5302a3"/><circle cx="244.5" cy="153.7" r="0.85" fill="#db5c68"/><circle cx="235.6" cy="149.8" r="0.85" fill="#b83289"/><circle cx="232.2" cy="141.7" r="0.85" fill="#5302a3"/><circle cx="252.4" cy="159.5" r="0.85" fill="#8b0aa5"/><circle cx="252.1" cy="153.6" r="0.85" fill="#f0f921"/><circle cx="320.1" cy="198.2" r="0.85" fill="#febd2a"/><circle cx="306.6" cy="186.9" r="0.85" fill="#b83289"/><circle cx="253.2" cy="164.6" r="0.85" fill="#b83289"/><circle cx="261.6" cy="162.0" r="0.85" fill="#db5c68"/><circle cx="299.1" cy="179.7" r="0.85" fill="#febd2a"/><circle cx="289.1" cy="173.9" r="0.85" fill="#db5c68"/><circle cx="287.6" cy="181.2" r="0.85" fill="#db5c68"/><circle cx="251.1" cy="158.1" r="0.85" fill="#f48849"/><circle cx="329.6" cy="201.3" r="0.85" fill="#febd2a"/><circle cx="252.0" cy="154.7" r="0.85" fill="#5302a3"/><circle cx="319.3" cy="196.3" r="0.85" fill="#db5c68"/><circle cx="300.8" cy="183.1" r="0.85" fill="#f0f921"/><circle cx="299.8" cy="186.7" r="0.85" fill="#db5c68"/><circle cx="233.1" cy="145.8" r="0.85" fill="#f0f921"/><circle cx="267.5" cy="167.4" r="0.85" fill="#db5c68"/><circle cx="283.1" cy="174.0" r="0.85" fill="#febd2a"/><circle cx="228.1" cy="138.6" r="0.85" fill="#f48849"/><circle cx="266.3" cy="163.1" r="0.85" fill="#f48849"/><circle cx="292.0" cy="178.8" r="0.85" fill="#5302a3"/><circle cx="306.5" cy="189.6" r="0.85" fill="#8b0aa5"/><circle cx="237.1" cy="147.9" r="0.85" fill="#febd2a"/><circle cx="235.2" cy="144.8" r="0.85" fill="#5302a3"/><circle cx="276.7" cy="176.7" r="0.85" fill="#b83289"/><circle cx="243.3" cy="149.7" r="0.85" fill="#febd2a"/><circle cx="237.3" cy="145.5" r="0.85" fill="#db5c68"/><circle cx="250.9" cy="159.3" r="0.85" fill="#febd2a"/><circle cx="242.1" cy="152.9" r="0.85" fill="#f48849"/><circle cx="283.1" cy="181.7" r="0.85" fill="#db5c68"/><circle cx="228.2" cy="141.2" r="0.85" fill="#f48849"/><circle cx="300.0" cy="188.1" r="0.85" fill="#f48849"/><circle cx="296.3" cy="178.1" r="0.85" fill="#8b0aa5"/><circle cx="241.1" cy="154.3" r="0.85" fill="#5302a3"/><circle cx="271.1" cy="166.0" r="0.85" fill="#f48849"/><circle cx="243.1" cy="147.4" r="0.85" fill="#5302a3"/><circle cx="318.9" cy="198.5" r="0.85" fill="#8b0aa5"/><circle cx="327.9" cy="202.5" r="0.85" fill="#b83289"/><circle cx="335.1" cy="201.0" r="0.85" fill="#f48849"/><circle cx="314.9" cy="188.9" r="0.85" fill="#db5c68"/><circle cx="256.2" cy="154.9" r="0.85" fill="#8b0aa5"/><circle cx="270.8" cy="166.9" r="0.85" fill="#db5c68"/><circle cx="232.7" cy="143.9" r="0.85" fill="#febd2a"/><circle cx="226.8" cy="142.7" r="0.85" fill="#b83289"/><circle cx="277.3" cy="167.1" r="0.85" fill="#8b0aa5"/><circle cx="233.1" cy="148.2" r="0.85" fill="#b83289"/><circle cx="265.8" cy="170.7" r="0.85" fill="#f48849"/><circle cx="320.7" cy="192.2" r="0.85" fill="#f48849"/><circle cx="281.2" cy="172.7" r="0.85" fill="#febd2a"/><circle cx="242.8" cy="152.2" r="0.85" fill="#b83289"/><circle cx="247.0" cy="149.7" r="0.85" fill="#5302a3"/><circle cx="250.6" cy="159.3" r="0.85" fill="#5302a3"/><circle cx="231.3" cy="146.9" r="0.85" fill="#8b0aa5"/><circle cx="260.9" cy="160.4" r="0.85" fill="#f48849"/><circle cx="278.4" cy="170.5" r="0.85" fill="#f48849"/><circle cx="231.3" cy="143.3" r="0.85" fill="#db5c68"/><circle cx="334.5" cy="201.6" r="0.85" fill="#b83289"/><circle cx="244.0" cy="150.8" r="0.85" fill="#f0f921"/><circle cx="269.4" cy="177.8" r="0.85" fill="#febd2a"/><circle cx="242.4" cy="151.8" r="0.85" fill="#db5c68"/><circle cx="297.2" cy="179.1" r="0.85" fill="#f0f921"/><circle cx="256.9" cy="156.8" r="0.85" fill="#5302a3"/><circle cx="307.6" cy="195.0" r="0.85" fill="#f48849"/><circle cx="234.0" cy="147.2" r="0.85" fill="#db5c68"/><circle cx="282.2" cy="192.2" r="0.85" fill="#db5c68"/><circle cx="244.9" cy="160.5" r="0.85" fill="#f0f921"/><circle cx="237.2" cy="154.1" r="0.85" fill="#febd2a"/><circle cx="299.8" cy="195.1" r="0.85" fill="#febd2a"/><circle cx="270.9" cy="170.9" r="0.85" fill="#f0f921"/><circle cx="303.6" cy="197.4" r="0.85" fill="#f0f921"/><circle cx="282.8" cy="180.2" r="0.85" fill="#febd2a"/><circle cx="317.0" cy="213.7" r="0.85" fill="#febd2a"/><circle cx="233.3" cy="145.5" r="0.85" fill="#f48849"/><circle cx="283.5" cy="175.5" r="0.85" fill="#f0f921"/><circle cx="284.0" cy="177.5" r="0.85" fill="#febd2a"/><circle cx="230.3" cy="150.1" r="0.85" fill="#f0f921"/><circle cx="297.0" cy="183.8" r="0.85" fill="#db5c68"/><circle cx="305.4" cy="187.9" r="0.85" fill="#f48849"/><circle cx="236.5" cy="154.7" r="0.85" fill="#db5c68"/><circle cx="274.4" cy="180.1" r="0.85" fill="#febd2a"/><circle cx="319.3" cy="197.5" r="0.85" fill="#f0f921"/><circle cx="311.9" cy="199.3" r="0.85" fill="#f48849"/><circle cx="278.4" cy="172.8" r="0.85" fill="#febd2a"/><circle cx="321.3" cy="201.9" r="0.85" fill="#f0f921"/><circle cx="295.5" cy="201.9" r="0.85" fill="#db5c68"/><circle cx="304.4" cy="193.8" r="0.85" fill="#db5c68"/><circle cx="242.2" cy="157.0" r="0.85" fill="#f0f921"/><circle cx="227.4" cy="146.8" r="0.85" fill="#f0f921"/><circle cx="300.7" cy="186.0" r="0.85" fill="#febd2a"/><circle cx="274.1" cy="169.2" r="0.85" fill="#febd2a"/><circle cx="245.0" cy="167.4" r="0.85" fill="#f48849"/><circle cx="260.1" cy="168.3" r="0.85" fill="#db5c68"/><circle cx="275.7" cy="173.1" r="0.85" fill="#f0f921"/><circle cx="247.1" cy="157.2" r="0.85" fill="#f48849"/><circle cx="264.4" cy="171.5" r="0.85" fill="#f0f921"/><circle cx="321.9" cy="202.9" r="0.85" fill="#db5c68"/><circle cx="271.7" cy="177.0" r="0.85" fill="#db5c68"/><circle cx="303.4" cy="191.5" r="0.85" fill="#febd2a"/><circle cx="313.6" cy="197.3" r="0.85" fill="#f0f921"/><circle cx="298.1" cy="192.6" r="0.85" fill="#db5c68"/><circle cx="296.6" cy="186.1" r="0.85" fill="#db5c68"/><circle cx="287.8" cy="177.5" r="0.85" fill="#febd2a"/><circle cx="297.3" cy="187.3" r="0.85" fill="#febd2a"/><circle cx="264.1" cy="178.6" r="0.85" fill="#f0f921"/><circle cx="291.4" cy="179.0" r="0.85" fill="#febd2a"/><circle cx="319.0" cy="197.0" r="0.85" fill="#f0f921"/><circle cx="308.2" cy="191.0" r="0.85" fill="#f0f921"/><circle cx="322.6" cy="197.5" r="0.85" fill="#f0f921"/><circle cx="304.1" cy="195.8" r="0.85" fill="#db5c68"/><circle cx="253.3" cy="159.4" r="0.85" fill="#f0f921"/><circle cx="271.1" cy="186.5" r="0.85" fill="#febd2a"/><circle cx="245.5" cy="154.8" r="0.85" fill="#f0f921"/><circle cx="353.1" cy="217.7" r="0.85" fill="#f48849"/><circle cx="368.1" cy="221.6" r="0.85" fill="#febd2a"/><circle cx="356.8" cy="217.4" r="0.85" fill="#f0f921"/><circle cx="353.3" cy="213.7" r="0.85" fill="#5302a3"/><circle cx="354.4" cy="214.2" r="0.85" fill="#5302a3"/><circle cx="352.1" cy="215.4" r="0.85" fill="#febd2a"/><circle cx="360.5" cy="219.6" r="0.85" fill="#b83289"/><circle cx="358.1" cy="215.9" r="0.85" fill="#5302a3"/><circle cx="350.9" cy="214.5" r="0.85" fill="#b83289"/><circle cx="363.0" cy="219.2" r="0.85" fill="#f48849"/><circle cx="340.7" cy="209.6" r="0.85" fill="#febd2a"/><circle cx="356.1" cy="214.3" r="0.85" fill="#5302a3"/><circle cx="336.1" cy="204.5" r="0.85" fill="#f0f921"/><circle cx="335.7" cy="211.1" r="0.85" fill="#f0f921"/><circle cx="480" cy="324" r="0.8" fill="#b83289"/><circle cx="430.2" cy="288.2" r="0.95" fill="#5302a3"/><circle cx="436.9" cy="286.5" r="0.95" fill="#5302a3"/><circle cx="431.2" cy="287.8" r="0.95" fill="#5302a3"/><circle cx="435.1" cy="294.4" r="0.95" fill="#8b0aa5"/><circle cx="432.0" cy="291.1" r="0.95" fill="#db5c68"/><circle cx="442.2" cy="295.9" r="0.95" fill="#febd2a"/><circle cx="432.4" cy="284.3" r="0.95" fill="#db5c68"/><circle cx="431.7" cy="290.9" r="0.95" fill="#5302a3"/><circle cx="430.0" cy="291.6" r="0.95" fill="#db5c68"/><circle cx="443.2" cy="291.5" r="0.95" fill="#b83289"/><circle cx="436.4" cy="291.9" r="0.95" fill="#db5c68"/><circle cx="429.5" cy="291.3" r="0.95" fill="#b83289"/><circle cx="432.2" cy="289.8" r="0.95" fill="#b83289"/><circle cx="434.8" cy="288.0" r="0.95" fill="#5302a3"/><circle cx="430.7" cy="287.6" r="0.95" fill="#5302a3"/><circle cx="442.8" cy="292.1" r="0.95" fill="#f0f921"/><circle cx="430.2" cy="285.5" r="0.95" fill="#f48849"/><circle cx="441.2" cy="294.2" r="0.95" fill="#db5c68"/><circle cx="428.8" cy="286.5" r="0.95" fill="#8b0aa5"/><circle cx="429.7" cy="286.2" r="0.95" fill="#db5c68"/><circle cx="436.3" cy="290.9" r="0.95" fill="#5302a3"/><circle cx="438.4" cy="297.9" r="0.95" fill="#db5c68"/><circle cx="434.9" cy="287.7" r="0.95" fill="#db5c68"/><circle cx="431.0" cy="291.4" r="0.95" fill="#f48849"/><circle cx="438.1" cy="288.7" r="0.95" fill="#f48849"/><circle cx="439.4" cy="296.3" r="0.95" fill="#b83289"/><circle cx="433.5" cy="285.5" r="0.95" fill="#5302a3"/><circle cx="442.7" cy="294.2" r="0.95" fill="#db5c68"/><circle cx="434.9" cy="295.6" r="0.95" fill="#f48849"/><circle cx="432.0" cy="290.1" r="0.95" fill="#5302a3"/><circle cx="432.5" cy="289.2" r="0.95" fill="#8b0aa5"/><circle cx="434.6" cy="288.1" r="0.95" fill="#b83289"/><circle cx="435.4" cy="292.4" r="0.95" fill="#f48849"/><circle cx="434.2" cy="292.2" r="0.95" fill="#b83289"/><circle cx="431.4" cy="291.4" r="0.95" fill="#b83289"/><circle cx="428.3" cy="284.8" r="0.95" fill="#f48849"/><circle cx="432.4" cy="294.3" r="0.95" fill="#5302a3"/><circle cx="436.2" cy="290.2" r="0.95" fill="#b83289"/><circle cx="431.3" cy="291.8" r="0.95" fill="#8b0aa5"/><circle cx="431.5" cy="294.9" r="0.95" fill="#b83289"/><circle cx="439.4" cy="291.2" r="0.95" fill="#f48849"/><circle cx="425.1" cy="290.1" r="0.95" fill="#5302a3"/><circle cx="437.1" cy="296.8" r="0.95" fill="#f48849"/><circle cx="437.5" cy="292.8" r="0.95" fill="#b83289"/><circle cx="428.4" cy="288.6" r="0.95" fill="#8b0aa5"/></g>
<text x="504.3" y="163.0" font-size="6.0" fill="#000000" text-anchor="middle">1</text>
<text x="502.0" y="180.8" font-size="6.0" fill="#000000" text-anchor="middle">0.9</text>
<text x="502.0" y="198.3" font-size="6.0" fill="#000000" text-anchor="middle">0.8</text>
<text x="502.0" y="216.1" font-size="6.0" fill="#000000" text-anchor="middle">0.7</text>
<text x="502.0" y="233.5" font-size="6.0" fill="#000000" text-anchor="middle">0.6</text>
<text x="502.0" y="250.1" font-size="6.0" fill="#000000" text-anchor="middle">0.5</text>
<text x="502.0" y="267.6" font-size="6.0" fill="#000000" text-anchor="middle">0.4</text>
<text x="513" y="218.3" font-size="7.6" fill="#000000" text-anchor="middle" dominant-baseline="central" textLength="54" lengthAdjust="spacingAndGlyphs" transform="rotate(-90 513 218.3)">D3 (normalized)</text>
<text x="236.6" y="266.7" font-size="6.0" fill="#000000" text-anchor="middle">1</text>
<text x="242.7" y="275.1" font-size="6.0" fill="#000000" text-anchor="middle">0.9</text>
<text x="252.5" y="283.1" font-size="6.0" fill="#000000" text-anchor="middle">0.8</text>
<text x="262.0" y="291.1" font-size="6.0" fill="#000000" text-anchor="middle">0.7</text>
<text x="270.8" y="299.7" font-size="6.0" fill="#000000" text-anchor="middle">0.6</text>
<text x="280.5" y="308.7" font-size="6.0" fill="#000000" text-anchor="middle">0.5</text>
<text x="289.0" y="319.0" font-size="6.0" fill="#000000" text-anchor="middle">0.4</text>
<text x="255.5" y="297" font-size="7.6" fill="#000000" text-anchor="middle" dominant-baseline="central" textLength="55" lengthAdjust="spacingAndGlyphs" transform="rotate(44 255.5 297)">D1 (normalized)</text>
<text x="324.0" y="329.5" font-size="6.0" fill="#000000" text-anchor="middle">0.9</text>
<text x="347.4" y="324.7" font-size="6.0" fill="#000000" text-anchor="middle">0.8</text>
<text x="370.0" y="320.1" font-size="6.0" fill="#000000" text-anchor="middle">0.7</text>
<text x="393.5" y="315.1" font-size="6.0" fill="#000000" text-anchor="middle">0.6</text>
<text x="415.3" y="310.8" font-size="6.0" fill="#000000" text-anchor="middle">0.5</text>
<text x="437.0" y="306.5" font-size="6.0" fill="#000000" text-anchor="middle">0.4</text>
<text x="409.2" y="318.3" font-size="7.6" fill="#000000" text-anchor="middle" dominant-baseline="central" textLength="55" lengthAdjust="spacingAndGlyphs" transform="rotate(-12.7 409.2 318.3)">D2 (normalized)</text>
<rect x="209.7" y="59.3" width="78.9" height="23.9" rx="1.8" fill="#dac9a6" stroke="#8f7f62" stroke-width="0.5"/>
<text x="212" y="66.8" font-size="7" fill="#111" stroke="#111" stroke-width="0.12" textLength="72.6" lengthAdjust="spacingAndGlyphs">Evolution: 398,579,000</text>
<text x="212" y="74.0" font-size="7" fill="#111" stroke="#111" stroke-width="0.12" textLength="75.0" lengthAdjust="spacingAndGlyphs">Ω: 1000.0 ▯ SATURATED</text>
<text x="212" y="81.2" font-size="7" fill="#111" stroke="#111" stroke-width="0.12" textLength="53.6" lengthAdjust="spacingAndGlyphs">Trail: 2000 points</text>
<rect x="437.2" y="58.1" width="62.6" height="10.4" rx="1.5" fill="#d9d9de" stroke="#bdbdc4" stroke-width="0.4"/>
<line x1="439" y1="63.4" x2="450.5" y2="63.4" stroke="#b6d9de" stroke-width="1.6"/>
<text x="455" y="65.6" font-size="6.6" fill="#111">Trajectory trail</text>
<g>
<circle cx="3.1" cy="2.5" r="1.1" fill="#f26a1b"/><circle cx="2.2" cy="4.4" r="1.1" fill="#eab308"/><circle cx="4.6" cy="3.5" r="0.9" fill="#9be37a"/><circle cx="4" cy="4.6" r="0.9" fill="#5b2a6a"/><circle cx="3" cy="5.8" r="0.8" fill="#7fe0d0"/><circle cx="5.2" cy="6" r="0.9" fill="#e9a07a"/>
<text x="9.4" y="7.1" font-size="5.8" fill="#222" textLength="17.6" lengthAdjust="spacingAndGlyphs">Figure 1</text>
<line x1="640.6" y1="4.6" x2="645.4" y2="4.6" stroke="#222" stroke-width="0.7"/>
<rect x="659.3" y="3" width="3.8" height="3.6" rx="0.5" fill="none" stroke="#222" stroke-width="0.8"/><path d="M660.4 3 V2.2 H663.9 V5.6 H663.1" fill="none" stroke="#222" stroke-width="0.6"/>
<path d="M678 2.4 L682.2 6.6 M682.2 2.4 L678 6.6" stroke="#222" stroke-width="0.7"/>
</g>
<text x="188.6" y="24.2" font-size="9" font-weight="bold" fill="#000" stroke="#000" stroke-width="0.25" textLength="312.4" lengthAdjust="spacingAndGlyphs">▯ Analog Codec V4.3 - Real-Time Strange Attractor Geometry</text>
<path d="M6.6 400.2 L2.6 403.9 H3.9 V406.8 H5.7 V404.9 H7.5 V406.8 H9.3 V403.9 H10.6 L9.6 403 V400.9 H8.6 V402.1Z" fill="#111"/>
<path d="M21.6 403.1 H16 M18.9 400 L15.3 403.1 L18.9 406.2" fill="none" stroke="#111" stroke-width="1.9" stroke-linecap="round" stroke-linejoin="round"/>
<path d="M25.9 403.1 H31.5 M28.6 400 L32.2 403.1 L28.6 406.2" fill="none" stroke="#7a7a7a" stroke-width="1.9" stroke-linecap="round" stroke-linejoin="round"/>
<line x1="37.4" y1="398.3" x2="37.4" y2="408" stroke="#d0d0d0" stroke-width="0.8"/>
<path d="M45.3 399.8 V407.3 M41.3 403.5 H49.3" stroke="#111" stroke-width="1.3"/><path d="M45.3 399.2 L43.8 400.9 H46.8Z M45.3 407.9 L43.8 406.2 H46.8Z M40.8 403.5 L42.5 402 V405Z M49.8 403.5 L48.1 402 V405Z" fill="#111"/>
<rect x="51.5" y="396.2" width="11.8" height="12.4" fill="#fafafa" stroke="#e2e2e2" stroke-width="0.5"/>
<circle cx="57" cy="402.7" r="2.7" fill="none" stroke="#111" stroke-width="1.2"/><line x1="59" y1="404.7" x2="61.6" y2="407.3" stroke="#111" stroke-width="1.4" stroke-linecap="round"/>
<path d="M65.2 400.6 H73.6 M65.2 403.2 H73.6 M65.2 405.8 H73.6" stroke="#111" stroke-width="0.9"/><rect x="70" y="399.7" width="1.6" height="1.8" fill="#111"/><rect x="67" y="402.3" width="1.6" height="1.8" fill="#111"/><rect x="70" y="404.9" width="1.6" height="1.8" fill="#111"/>
<line x1="76.9" y1="398.3" x2="76.9" y2="408" stroke="#d0d0d0" stroke-width="0.8"/>
<path d="M80.9 399.9 H87.2 L88.6 401.3 V406.9 H80.9Z" fill="none" stroke="#111" stroke-width="1.1"/><rect x="82.6" y="400" width="3.6" height="2.2" fill="#111"/><rect x="82.3" y="404.1" width="4.9" height="2.4" fill="#fff" stroke="#111" stroke-width="0.8"/>
<text x="598.5" y="405.4" font-size="6.4" fill="#1a1a1a" textLength="84.3" lengthAdjust="spacingAndGlyphs">x=0.4253, y=0.1758, z pane=0.2774</text>
<defs><linearGradient id="sun" x1="0" y1="0" x2="0.6" y2="1"><stop offset="0" stop-color="#f7b21c"/><stop offset="1" stop-color="#ee5a12"/></linearGradient></defs>
<circle cx="12.6" cy="421.1" r="4.1" fill="url(#sun)"/>
<circle cx="15.7" cy="417" r="3.1" fill="#c8102e" stroke="#fce4cc" stroke-width="0.5"/><text x="15.7" y="418.6" font-size="4.2" fill="#fff" text-anchor="middle" font-weight="bold">3</text>
<text x="21" y="419.8" font-size="4.8" fill="#222" font-weight="bold">38°F</text><text x="21" y="426.6" font-size="4.6" fill="#555">Sunny</text>
<g fill="#1f8fe0"><rect x="204.2" y="416.8" width="4.7" height="4.7"/><rect x="209.5" y="416.8" width="4.7" height="4.7"/><rect x="204.2" y="422" width="4.7" height="4.7"/><rect x="209.5" y="422" width="4.7" height="4.7"/></g>
<rect x="220" y="415.6" width="88" height="12.4" rx="6.2" fill="#fffaf4" stroke="#e8dccf" stroke-width="0.5"/>
<circle cx="227.8" cy="421.2" r="1.8" fill="none" stroke="#222" stroke-width="0.8"/><line x1="229.1" y1="422.5" x2="230.4" y2="423.8" stroke="#222" stroke-width="0.8"/>
<text x="234" y="423.6" font-size="5.6" fill="#555">Search</text>
<path d="M290 425 L292 418 M293 425 L294.5 419 M291 421 L296 420" stroke="#e4572e" stroke-width="0.9"/><path d="M297 421.5 Q301 419 305 420.5 Q301 423 297 421.5Z" fill="#f29a2e"/>
<rect x="314.2" y="419.6" width="8.2" height="6" fill="#111"/><rect x="317.4" y="418.8" width="5" height="4.6" fill="#d8d8d8"/>
<rect x="332.5" y="416.8" width="10" height="10" rx="1.5" fill="#dfe7f0" stroke="#9fb0c4" stroke-width="0.4"/><rect x="335.5" y="418.6" width="4.5" height="6" fill="#2a6fd1"/>
<path d="M351.5 417 L360.5 417 L359.8 423.5 L356 426.8 L352.2 423.5Z" fill="#e6452e"/><path d="M354 419.5 L356 423 L358 419.5" fill="none" stroke="#fff" stroke-width="0.9"/>
<path d="M368.5 417.6 H372.2 L373.2 418.6 H378.8 V425.8 H368.5Z" fill="#f2b92e"/><rect x="368.5" y="419.6" width="10.3" height="6.2" fill="#f9cf4a"/><rect x="370.5" y="423.4" width="6.4" height="2.4" fill="#2a7bd6"/>
<circle cx="391.8" cy="421.4" r="5" fill="#1a7fe0"/><path d="M388 422.8 Q389.5 419.6 393 420 Q395.8 420.3 395.5 422 Q393.5 424.6 390.5 424.2 Q388.6 424 388 422.8Z" fill="#fff"/>
<path d="M411.6 416.6 L414.9 418 V425 L411.6 426.4Z" fill="#1f8ad8"/><path d="M412 417.8 L405.4 423.6 M412 425.2 L405.4 419.4" stroke="#1f8ad8" stroke-width="1.7" stroke-linecap="round"/>
<rect x="424.3" y="416.6" width="7" height="10.2" rx="0.6" fill="#3a98d8"/><path d="M425.2 418.8 H430.4 M425.2 420.3 H430.4 M425.2 421.8 H430.4 M425.2 423.3 H430.4" stroke="#9fd3f0" stroke-width="0.5"/><rect x="424.3" y="425.2" width="7" height="1.6" fill="#e07a3a"/>
<rect x="441.3" y="418.5" width="7" height="8.6" fill="#8cc63f"/><rect x="445.6" y="414.8" width="7" height="8.6" fill="#7ab834" stroke="#fce4cc" stroke-width="0.4"/><path d="M442.8 420.5 L446.8 425.5 M446.8 420.5 L442.8 425.5 M447.5 421.5 L449.1 416.5 L450.7 421.5" stroke="#1d3d10" stroke-width="0.6" fill="none"/>
<rect x="458.5" y="417.2" width="10.5" height="9" rx="1" fill="#1b1b1b"/><path d="M460.5 419.8 L462.3 421.2 L460.5 422.6" fill="none" stroke="#fff" stroke-width="0.6"/><line x1="463" y1="423.2" x2="466" y2="423.2" stroke="#fff" stroke-width="0.6"/>
<rect x="475" y="414.5" width="12.5" height="14" fill="#f5ebe2"/><path d="M478.6 426 Q479.6 419.5 485 416.2 Q484 422.5 478.6 426Z" fill="#1f4f9e"/><rect x="477.5" y="428" width="7.5" height="1" fill="#1f7fd6"/>
<rect x="355.0" y="428.3" width="2" height="0.8" fill="#8c8c8c"/>
<rect x="372.5" y="428.3" width="2" height="0.8" fill="#8c8c8c"/>
<rect x="390.8" y="428.3" width="2" height="0.8" fill="#8c8c8c"/>
<rect x="409.5" y="428.3" width="2" height="0.8" fill="#8c8c8c"/>
<rect x="426.7" y="428.3" width="2" height="0.8" fill="#8c8c8c"/>
<rect x="446.2" y="428.3" width="2" height="0.8" fill="#8c8c8c"/>
<rect x="462.7" y="428.3" width="2" height="0.8" fill="#8c8c8c"/>
<path d="M622.5 422.3 L624.6 420.2 L626.7 422.3" fill="none" stroke="#222" stroke-width="0.7"/>
<path d="M633 420 Q636.4 417 639.8 420 M634.2 421.3 Q636.4 419.4 638.6 421.3" fill="none" stroke="#222" stroke-width="0.7"/><circle cx="636.4" cy="422.7" r="0.8" fill="#222"/>
<path d="M644 420.5 H645.3 L647.3 418.6 V424.8 L645.3 422.9 H644Z" fill="#222"/><path d="M648.5 420 Q649.6 421.7 648.5 423.4" fill="none" stroke="#222" stroke-width="0.5"/>
<text x="682.6" y="420" font-size="4.8" fill="#222" text-anchor="end">10:30 AM</text>
<text x="683" y="426.8" font-size="4.8" fill="#222" text-anchor="end">10/29/2025</text>
</svg>
</body></html>
